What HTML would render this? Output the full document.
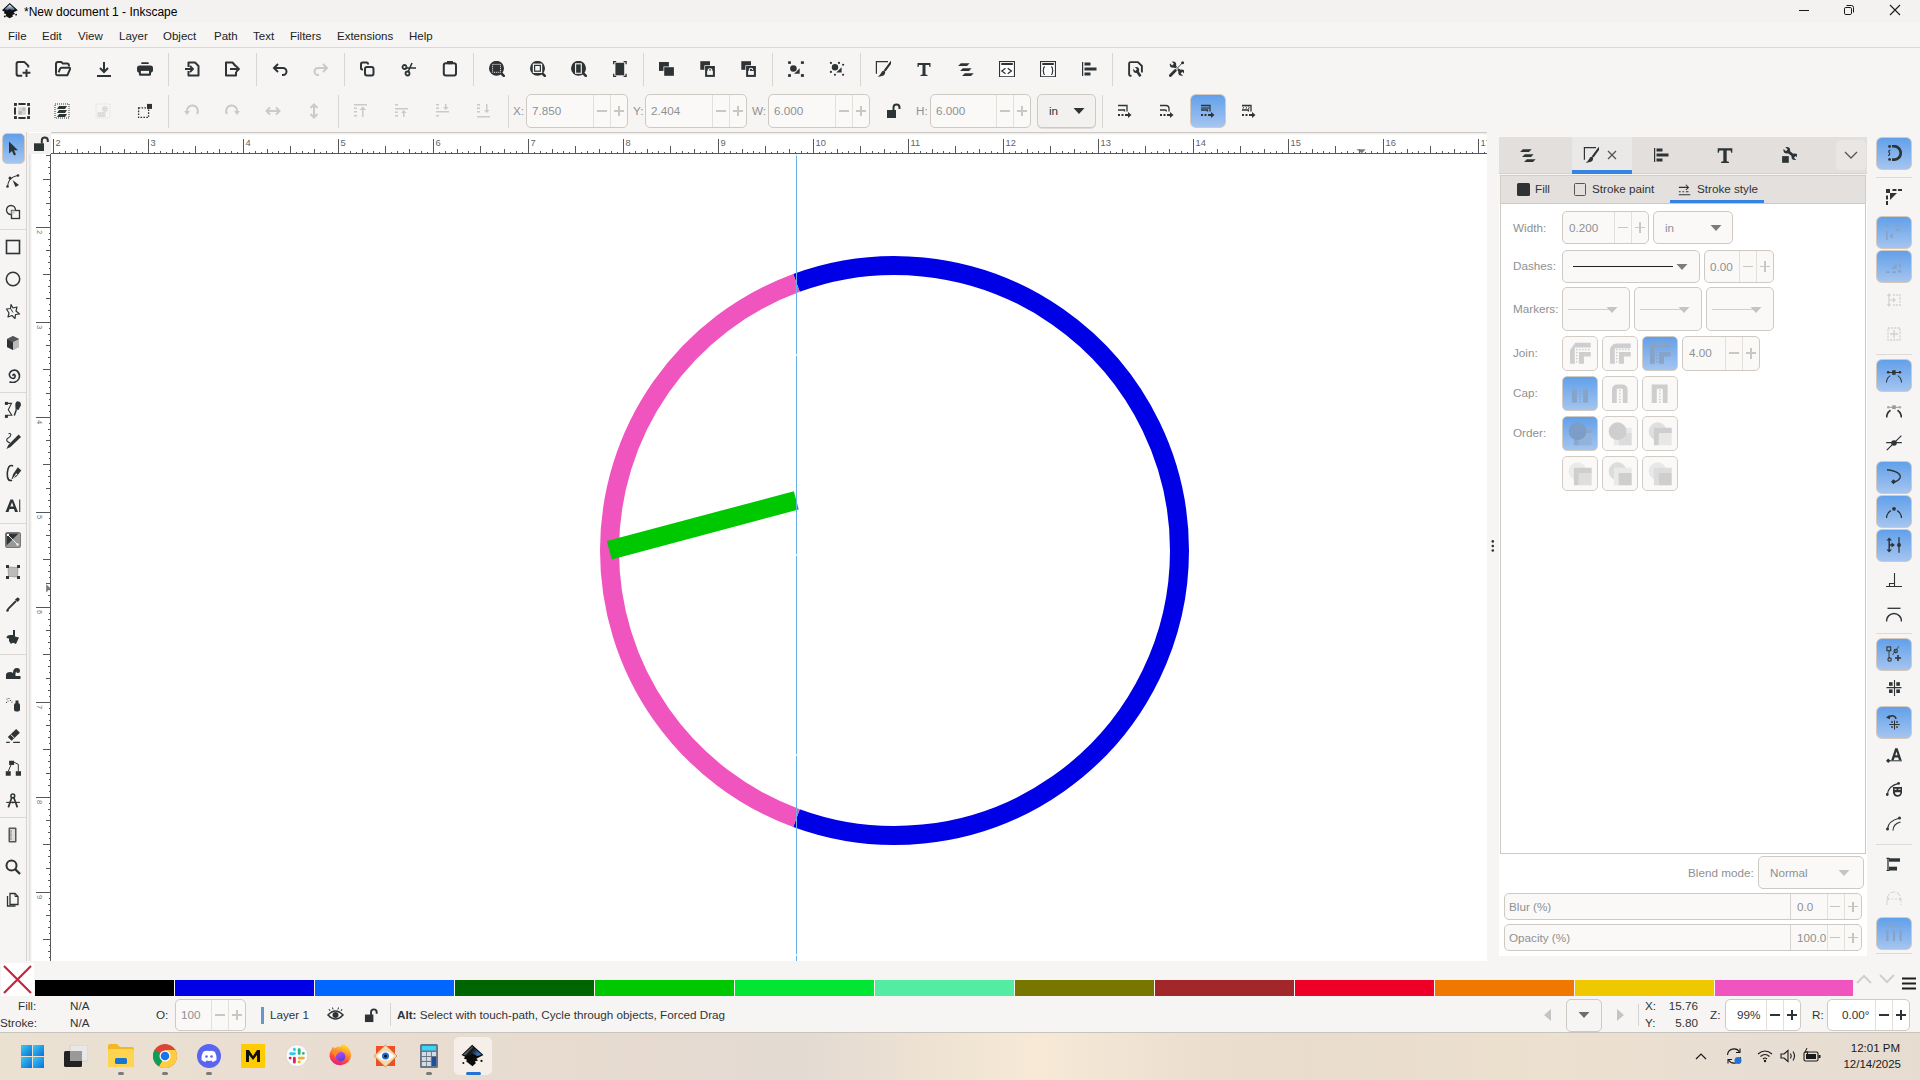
<!DOCTYPE html><html><head><meta charset="utf-8"><style>
html,body{margin:0;padding:0;width:1920px;height:1080px;overflow:hidden;background:#f6f5f4;font-family:"Liberation Sans",sans-serif}
body>div,.ic{position:absolute}
.t{white-space:nowrap;line-height:16px}
</style></head><body>
<div style="left:0px;top:0px;width:1920px;height:23px;background:#f3f2f0"></div>
<svg class="ic" style="left:0px;top:0px;width:20px;height:20px" viewBox="0 0 20 20"><defs><linearGradient id="ttl" x1="0" y1="0" x2="0" y2="1"><stop offset="0" stop-color="#fff"/><stop offset="1" stop-color="#1e4f8a"/></linearGradient></defs><path d="M9.7 3L2 10.3 4.6 11.8 3.8 13.3 6.2 14.2 5.6 15.9 9.7 18.3 13.2 16.3 12.2 14.9 15.2 13.9 13.6 12.3 17.8 10.3z" fill="#111"/><path d="M9.7 4.4L4.6 9.3 7.3 10.4 9.7 9 12.1 10.4 15 9.3z" fill="url(#ttl)"/><circle cx="4.8" cy="16.4" r=".9" fill="#111"/><circle cx="16.1" cy="14.7" r=".9" fill="#111"/></svg>
<div class="t" style="left:24px;top:4px;font-size:12px;color:#000">*New document 1 - Inkscape</div>
<div style="left:1799px;top:10px;width:10px;height:1px;background:#1a1a1a"></div>
<svg class="ic" style="left:1843px;top:4px;width:12px;height:12px" viewBox="0 0 12 12"><rect x="1.5" y="3.5" width="7" height="7" rx="1.3" fill="none" stroke="#1a1a1a" stroke-width="1"/><path d="M3.5 1.5h5a2 2 0 0 1 2 2v5" fill="none" stroke="#1a1a1a" stroke-width="1"/></svg>
<svg class="ic" style="left:1889px;top:4px;width:12px;height:12px" viewBox="0 0 12 12"><path d="M1 1l10 10M11 1L1 11" stroke="#1a1a1a" stroke-width="1.1"/></svg>
<div style="left:0px;top:23px;width:1920px;height:110px;background:#f6f5f4"></div>
<div class="t" style="left:8px;top:28px;font-size:11.5px;color:#222">File</div>
<div class="t" style="left:42px;top:28px;font-size:11.5px;color:#222">Edit</div>
<div class="t" style="left:78px;top:28px;font-size:11.5px;color:#222">View</div>
<div class="t" style="left:119px;top:28px;font-size:11.5px;color:#222">Layer</div>
<div class="t" style="left:163px;top:28px;font-size:11.5px;color:#222">Object</div>
<div class="t" style="left:214px;top:28px;font-size:11.5px;color:#222">Path</div>
<div class="t" style="left:253px;top:28px;font-size:11.5px;color:#222">Text</div>
<div class="t" style="left:290px;top:28px;font-size:11.5px;color:#222">Filters</div>
<div class="t" style="left:337px;top:28px;font-size:11.5px;color:#222">Extensions</div>
<div class="t" style="left:409px;top:28px;font-size:11.5px;color:#222">Help</div>
<div style="left:0px;top:47px;width:1920px;height:1px;background:#dcd8d4"></div>
<svg class="ic" style="left:14.5px;top:61px;width:16px;height:16px" viewBox="0 0 16 16" ><path d="M7.2 14.75H3.4A1.8 1.8 0 0 1 1.6 12.95V2.9A1.8 1.8 0 0 1 3.4 1.1H9.5L13.25 4.8V6.6" fill="none" stroke="#2e3436" stroke-width="2" stroke-linejoin="round"/><path d="M11.5 8.3V16M7.6 11.8H15.4" stroke="#2e3436" stroke-width="2"/></svg>
<svg class="ic" style="left:55px;top:61px;width:16px;height:16px" viewBox="0 0 16 16" ><path d="M1 12.8V3A2 2 0 0 1 3 1H6.3L7.9 2.6H12.3A1.6 1.6 0 0 1 13.9 4.2V5.6" fill="none" stroke="#2e3436" stroke-width="2" stroke-linejoin="round"/><path d="M1 12.8A1.5 1.5 0 0 0 2.5 14.3H12.3L15.2 7.8A0.9 0.9 0 0 0 14.4 6.7H6.6A1.6 1.6 0 0 0 5.1 7.7L3.6 11.3" fill="none" stroke="#2e3436" stroke-width="2" stroke-linejoin="round"/></svg>
<svg class="ic" style="left:96.0px;top:61.0px;width:16px;height:16px" viewBox="0 0 16 16" ><path d="M8 1v10M4 7l4 4 4-4" fill="none" stroke="#2e3436" stroke-width="2"/><path d="M1 15h14" stroke="#2e3436" stroke-width="2"/></svg>
<svg class="ic" style="left:137px;top:61px;width:16px;height:16px" viewBox="0 0 16 16" ><rect x="4.25" y="1.3" width="7.5" height="1.7" rx=".6" fill="#2e3436"/><rect x="0" y="4.4" width="16" height="7.3" rx="2.6" fill="#2e3436"/><rect x="1.9" y="8" width="12.1" height="6.8" rx="1.6" fill="#2e3436"/><rect x="3.9" y="9.9" width="8.1" height="2.7" fill="#f6f5f4"/></svg>
<svg class="ic" style="left:184.5px;top:61.0px;width:16px;height:16px" viewBox="0 0 16 16" ><path d="M3.5 10v4.5h10V5l-3.5-3.5H3.5V6" fill="none" stroke="#2e3436" stroke-width="2" stroke-linejoin="round"/><path d="M0 8h7M5 5l3 3-3 3" fill="none" stroke="#2e3436" stroke-width="1.8"/></svg>
<svg class="ic" style="left:224.0px;top:61.0px;width:16px;height:16px" viewBox="0 0 16 16" ><path d="M12 5.5L8.5 1.5H2v13h10V11" fill="none" stroke="#2e3436" stroke-width="2" stroke-linejoin="round"/><path d="M6 8h9M12 5l3 3-3 3" fill="none" stroke="#2e3436" stroke-width="1.8"/></svg>
<svg class="ic" style="left:272.0px;top:61.0px;width:16px;height:16px" viewBox="0 0 16 16" ><path d="M2 7h9a3.5 3.5 0 0 1 0 7h-1" fill="none" stroke="#2e3436" stroke-width="2"/><path d="M6 3L2 7l4 4" fill="none" stroke="#2e3436" stroke-width="2"/></svg>
<svg class="ic" style="left:313.0px;top:61.0px;width:16px;height:16px" viewBox="0 0 16 16" ><path d="M14 7H5a3.5 3.5 0 0 0 0 7h1" fill="none" stroke="#cacac9" stroke-width="2"/><path d="M10 3l4 4-4 4" fill="none" stroke="#cacac9" stroke-width="2"/></svg>
<svg class="ic" style="left:359.0px;top:61.0px;width:16px;height:16px" viewBox="0 0 16 16" ><path d="M9 3.5V3a1.5 1.5 0 0 0-1.5-1.5h-4A1.5 1.5 0 0 0 2 3v4a1.5 1.5 0 0 0 1.5 1.5H4" fill="none" stroke="#2e3436" stroke-width="2"/><rect x="6" y="6" width="8.5" height="8.5" rx="2" fill="none" stroke="#2e3436" stroke-width="2"/></svg>
<svg class="ic" style="left:401.0px;top:61.0px;width:16px;height:16px" viewBox="0 0 16 16" ><circle cx="3.5" cy="6" r="2" fill="none" stroke="#2e3436" stroke-width="1.8"/><circle cx="6.5" cy="12.5" r="2" fill="none" stroke="#2e3436" stroke-width="1.8"/><path d="M5 7h10M7 11l4-9" fill="none" stroke="#2e3436" stroke-width="1.6"/></svg>
<svg class="ic" style="left:442px;top:61px;width:16px;height:16px" viewBox="0 0 16 16" ><rect x="1.8" y="2.2" width="12.2" height="12.4" rx="2" fill="none" stroke="#2e3436" stroke-width="2"/><rect x="4.9" y="-0.2" width="6.1" height="3.4" rx="1" fill="#2e3436"/></svg>
<svg class="ic" style="left:489.0px;top:61.0px;width:16px;height:16px" viewBox="0 0 16 16" ><circle cx="7.5" cy="7.3" r="7.5" fill="#2e3436"/><path d="M11.5 11.5l3.3 3.3" stroke="#2e3436" stroke-width="2.6" stroke-linecap="round"/><rect x="3.6" y="3.4" width="7.9" height="7.9" fill="none" stroke="#f6f5f4" stroke-width="1" stroke-dasharray="1 .95"/></svg>
<svg class="ic" style="left:530.0px;top:61.0px;width:16px;height:16px" viewBox="0 0 16 16" ><circle cx="7.5" cy="7.3" r="7.5" fill="#2e3436"/><path d="M11.5 11.5l3.3 3.3" stroke="#2e3436" stroke-width="2.6" stroke-linecap="round"/><rect x="3.4" y="3.2" width="8.2" height="8.2" fill="none" stroke="#f6f5f4" stroke-width="1.2"/><rect x="5.2" y="5" width="4.6" height="4.6" fill="#f6f5f4"/></svg>
<svg class="ic" style="left:571.0px;top:61.0px;width:16px;height:16px" viewBox="0 0 16 16" ><circle cx="7.5" cy="7.3" r="7.5" fill="#2e3436"/><path d="M11.5 11.5l3.3 3.3" stroke="#2e3436" stroke-width="2.6" stroke-linecap="round"/><rect x="4.6" y="2.8" width="5.7" height="9.5" fill="none" stroke="#f6f5f4" stroke-width="1.1"/></svg>
<svg class="ic" style="left:612.0px;top:61.0px;width:16px;height:16px" viewBox="0 0 16 16" ><rect x="3.4" y="1.8" width="8.8" height="12.5" fill="#2e3436"/><path d="M1.7 3.2V0.7H4.2M11.6 0.7h2.5v2.5M14.1 12.8v2.5h-2.5M4.2 15.3H1.7v-2.5" fill="none" stroke="#2e3436" stroke-width="1.3"/></svg>
<svg class="ic" style="left:658.0px;top:61.0px;width:16px;height:16px" viewBox="0 0 16 16" ><rect x="1" y="1" width="9.9" height="8.9" fill="#2e3436"/><rect x="5.5" y="5.5" width="11" height="10" fill="#f6f5f4"/><rect x="6.2" y="6.2" width="9.7" height="8.6" fill="#2e3436"/></svg>
<svg class="ic" style="left:699.0px;top:61.0px;width:16px;height:16px" viewBox="0 0 16 16" ><rect x="1.3" y="0.2" width="9.7" height="8.6" fill="#2e3436"/><rect x="5.4" y="4.3" width="11" height="12" fill="#f6f5f4"/><rect x="6.1" y="5" width="9.8" height="10.9" fill="#2e3436"/><rect x="8.1" y="9.9" width="5.8" height="4" fill="#f6f5f4"/><path d="M11 7.2a2.3 2.3 0 0 1 2.3 2.7H8.7A2.3 2.3 0 0 1 11 7.2z" fill="#f6f5f4"/><circle cx="11" cy="8.9" r=".8" fill="#2e3436"/></svg>
<svg class="ic" style="left:740.0px;top:61.0px;width:16px;height:16px" viewBox="0 0 16 16" ><rect x="1.3" y="0.2" width="9.7" height="8.6" fill="#2e3436"/><rect x="5.4" y="4.3" width="11" height="12" fill="#f6f5f4"/><rect x="6.1" y="5" width="9.8" height="10.9" fill="#2e3436"/><rect x="8.1" y="9.9" width="5.8" height="4" fill="#f6f5f4"/><path d="M9.3 10V9a1.7 1.7 0 0 1 3.4 0" fill="none" stroke="#f6f5f4" stroke-width="1.1"/></svg>
<svg class="ic" style="left:788.0px;top:61.0px;width:16px;height:16px" viewBox="0 0 16 16" ><g fill="#2e3436"><rect x="0.1" y="0.3" width="2.8" height="2.6"/><rect x="12.9" y="0.3" width="3" height="2.6"/><rect x="0.1" y="13.1" width="2.8" height="2.8"/><rect x="12.9" y="13.1" width="3" height="2.8"/><path d="M11.7 7.2V12.8H6z"/></g><circle cx="5.4" cy="7.5" r="3.9" fill="#f6f5f4"/><circle cx="5.4" cy="7.5" r="3.3" fill="#2e3436"/></svg>
<svg class="ic" style="left:829.0px;top:61.0px;width:16px;height:16px" viewBox="0 0 16 16" ><g fill="#2e3436"><circle cx="1.9" cy="1.9" r="1.1"/><circle cx="10" cy="1.9" r="1.1"/><circle cx="14.1" cy="3.75" r="1.1"/><circle cx="1.9" cy="10.9" r="1.1"/><circle cx="6" cy="13.75" r="1.1"/><circle cx="14.1" cy="13.75" r="1.1"/><path d="M12.6 6.25V11.6H7.25z"/></g><circle cx="6" cy="6.25" r="3.8" fill="#f6f5f4"/><circle cx="6" cy="6.25" r="3.2" fill="#2e3436"/></svg>
<svg class="ic" style="left:875.0px;top:61.0px;width:16px;height:16px" viewBox="0 0 16 16" ><path d="M13 0.6H1.4V12.8" fill="none" stroke="#2e3436" stroke-width="1.2"/><path d="M16.3 0.8L10.2 9.2" stroke="#2e3436" stroke-width="2.2" stroke-linecap="round"/><path d="M9.3 9.6Q11 11.2 9.6 13.6Q7.8 15.7 2.6 15.7Q5.3 14.2 5.9 12.3Q6.8 9.6 9.3 9.6z" fill="#2e3436"/></svg>
<svg class="ic" style="left:916.0px;top:61.0px;width:16px;height:16px" viewBox="0 0 16 16" ><path d="M1.5 2h13v4h-1l-.5-2H9.5v9.5l2 .5v1h-7v-1l2-.5V4H3L2.5 6h-1z" fill="#2e3436"/></svg>
<svg class="ic" style="left:958.0px;top:61.0px;width:16px;height:16px" viewBox="0 0 16 16" ><path d="M2.8 2.2H11.7L9 4.9H0.1zM4.8 7.2H13.7L11 9.9H2.1zM6.8 12.2H15.7L13 14.9H4.1z" fill="#2e3436"/></svg>
<svg class="ic" style="left:999.0px;top:61.0px;width:16px;height:16px" viewBox="0 0 16 16" ><rect x="0.55" y="0.55" width="14.9" height="15.2" fill="#fff" stroke="#2e3436" stroke-width="1.1"/><rect x="2.1" y="2.1" width="11.9" height="1.9" rx=".8" fill="#2e3436"/><path d="M6.5 7.2L2.8 10 6.5 12.7M8.7 7.2L12.4 10 8.7 12.7" fill="none" stroke="#2e3436" stroke-width="1.3"/></svg>
<svg class="ic" style="left:1040.0px;top:61.0px;width:16px;height:16px" viewBox="0 0 16 16" ><rect x="0.55" y="0.55" width="14.9" height="15.2" fill="#fff" stroke="#2e3436" stroke-width="1.1"/><rect x="2.1" y="2.1" width="11.9" height="1.9" rx=".8" fill="#2e3436"/><path d="M5 5.9Q3.6 5.9 3.6 7.1V8.6Q3.6 9.5 2.7 9.7Q3.6 9.9 3.6 10.8V12.3Q3.6 13.5 5 13.5M11 5.9Q12.4 5.9 12.4 7.1V8.6Q12.4 9.5 13.3 9.7Q12.4 9.9 12.4 10.8V12.3Q12.4 13.5 11 13.5" fill="none" stroke="#2e3436" stroke-width="1.15"/></svg>
<svg class="ic" style="left:1081.0px;top:61.0px;width:16px;height:16px" viewBox="0 0 16 16" ><rect x="1" y="1" width="1.2" height="14" fill="#2e3436"/><rect x="3.5" y="1.5" width="6" height="3" fill="#2e3436"/><rect x="3.5" y="6.5" width="12" height="3" fill="#2e3436"/><rect x="3.5" y="11.5" width="6" height="3" fill="#2e3436"/></svg>
<svg class="ic" style="left:1127.0px;top:61.0px;width:16px;height:16px" viewBox="0 0 16 16" ><path d="M4.5 14.7H3.1Q2.1 14.7 2.1 13.2V2.6Q2.1 1.1 3.6 1.1H10.9L14.9 5V11.5" fill="none" stroke="#2e3436" stroke-width="1.9" stroke-linejoin="round"/><mask id="wmC"><rect x="-2" y="-2" width="20" height="20" fill="#fff"/><path d="M9.2 9.1L6.7 6.6" stroke="#000" stroke-width="2.2"/></mask><g mask="url(#wmC)"><circle cx="9.2" cy="9.1" r="3" fill="#2e3436"/></g><path d="M9.5 9.5L13.5 15.3" stroke="#2e3436" stroke-width="2.6"/></svg>
<svg class="ic" style="left:1168.0px;top:61.0px;width:16px;height:16px" viewBox="0 0 16 16" ><mask id="wmB"><rect x="-2" y="-2" width="20" height="20" fill="#fff"/><path d="M5 3.6L1.5 0.1" stroke="#000" stroke-width="2.4"/><path d="M13.5 11.6L17 15.1" stroke="#000" stroke-width="2.4"/></mask><g mask="url(#wmB)" fill="#2e3436"><circle cx="5" cy="3.6" r="3.2"/><circle cx="13.5" cy="11.6" r="3.2"/><path d="M5 3.6L13.5 11.6" stroke="#2e3436" stroke-width="2.6"/></g><path d="M14.9 1.3L8 8.5" stroke="#f6f5f4" stroke-width="2.2"/><path d="M14.9 1.3L8 8.5" stroke="#2e3436" stroke-width="0.9"/><circle cx="14.6" cy="1.8" r="1.5" fill="#2e3436"/><path d="M7.3 9.6L2.4 14.6" stroke="#f6f5f4" stroke-width="4.2" stroke-linecap="round"/><path d="M7.3 9.6L2.4 14.6" stroke="#2e3436" stroke-width="2.8" stroke-linecap="round"/></svg>
<div style="left:168px;top:53px;width:1px;height:33px;background:#d9d5d1"></div>
<div style="left:256px;top:53px;width:1px;height:33px;background:#d9d5d1"></div>
<div style="left:344px;top:53px;width:1px;height:33px;background:#d9d5d1"></div>
<div style="left:473px;top:53px;width:1px;height:33px;background:#d9d5d1"></div>
<div style="left:643px;top:53px;width:1px;height:33px;background:#d9d5d1"></div>
<div style="left:772px;top:53px;width:1px;height:33px;background:#d9d5d1"></div>
<div style="left:860px;top:53px;width:1px;height:33px;background:#d9d5d1"></div>
<div style="left:1112px;top:53px;width:1px;height:33px;background:#d9d5d1"></div>
<svg class="ic" style="left:14.0px;top:103.0px;width:16px;height:16px" viewBox="0 0 16 16" ><g fill="#2e3436"><rect x="0" y="0" width="2.9" height="2.9"/><rect x="13.1" y="0" width="2.9" height="2.9"/><rect x="0" y="13.1" width="2.9" height="2.9"/><rect x="13.1" y="13.1" width="2.9" height="2.9"/><rect x="4.4" y="0" width="7.2" height="2"/><rect x="4.4" y="14" width="7.2" height="2"/><rect x="0" y="4.4" width="2" height="7.2"/><rect x="14" y="4.4" width="2" height="7.2"/></g><rect x="4.3" y="4.3" width="3.6" height="3.6" fill="#d3d3d3"/><rect x="8.1" y="4.3" width="3.6" height="3.6" fill="#bdbdbd"/><rect x="4.3" y="8.1" width="3.6" height="3.6" fill="#b3b3b3"/><rect x="8.1" y="8.1" width="3.6" height="3.6" fill="#d3d3d3"/></svg>
<svg class="ic" style="left:54.0px;top:103.0px;width:16px;height:16px" viewBox="0 0 16 16" ><rect x="1" y="1" width="14" height="14" fill="none" stroke="#2e3436" stroke-width="1" stroke-dasharray="1 1"/><path d="M5 3h8l-2 3H3zM5 7h8l-2 3H3zM5 11h8l-2 3H3z" fill="#2e3436"/></svg>
<svg class="ic" style="left:95.0px;top:103.0px;width:16px;height:16px" viewBox="0 0 16 16" ><rect x="1" y="1" width="14" height="14" fill="none" stroke="#ddd" stroke-width="1" stroke-dasharray="1 1"/><circle cx="10" cy="6" r="3" fill="#ddd"/><rect x="2.5" y="9" width="8" height="5" fill="#ddd"/></svg>
<svg class="ic" style="left:137.0px;top:103.0px;width:16px;height:16px" viewBox="0 0 16 16" ><rect x="1.6" y="4.8" width="10" height="9.6" fill="none" stroke="#2e3436" stroke-width="1.3" stroke-dasharray="1.6 1.3"/><rect x="10" y="0.9" width="5" height="5" fill="#2e3436"/></svg>
<svg class="ic" style="left:184.0px;top:103.0px;width:16px;height:16px" viewBox="0 0 16 16" ><path d="M3 9a5.5 5.5 0 1 1 10 2" fill="none" stroke="#cacac9" stroke-width="2"/><path d="M0 8h6l-3 4z" fill="#cacac9"/></svg>
<svg class="ic" style="left:224.0px;top:103.0px;width:16px;height:16px" viewBox="0 0 16 16" ><path d="M13 9a5.5 5.5 0 1 0-10 2" fill="none" stroke="#cacac9" stroke-width="2"/><path d="M10 8h6l-3 4z" fill="#cacac9"/></svg>
<svg class="ic" style="left:265.0px;top:103.0px;width:16px;height:16px" viewBox="0 0 16 16" ><path d="M2 8h12M5 4.5L1.5 8 5 11.5M11 4.5L14.5 8 11 11.5" fill="none" stroke="#cacac9" stroke-width="2"/></svg>
<svg class="ic" style="left:306.0px;top:103.0px;width:16px;height:16px" viewBox="0 0 16 16" ><path d="M8 2v12M4.5 5L8 1.5 11.5 5M4.5 11L8 14.5 11.5 11" fill="none" stroke="#cacac9" stroke-width="2"/></svg>
<svg class="ic" style="left:353.0px;top:103.0px;width:16px;height:16px" viewBox="0 0 16 16" ><g fill="#cacac9"><rect x="1" y="1" width="13" height="1.5"/><rect x="1" y="4.5" width="3" height="1.5"/><rect x="1" y="8" width="3" height="1.5"/><rect x="1" y="12" width="3" height="1.5"/><rect x="9" y="6" width="1.5" height="8"/><path d="M6.5 7l3.25-3.5L13 7z"/></g></svg>
<svg class="ic" style="left:394.0px;top:103.0px;width:16px;height:16px" viewBox="0 0 16 16" ><g fill="#cacac9"><rect x="1" y="1" width="3" height="1.5"/><rect x="1" y="5" width="13" height="1.5"/><rect x="1" y="8.5" width="3" height="1.5"/><rect x="1" y="12" width="3" height="1.5"/><rect x="9" y="9" width="1.5" height="5"/><path d="M7 10l2.75-3L12.5 10z"/></g></svg>
<svg class="ic" style="left:435.0px;top:103.0px;width:16px;height:16px" viewBox="0 0 16 16" ><g fill="#cacac9"><rect x="1" y="1" width="3" height="1.5"/><rect x="1" y="4.5" width="3" height="1.5"/><rect x="1" y="8" width="13" height="1.5"/><rect x="1" y="12" width="3" height="1.5"/><rect x="10" y="1" width="1.5" height="4"/><path d="M8 4l2.75 3L13.5 4z"/></g></svg>
<svg class="ic" style="left:476.0px;top:103.0px;width:16px;height:16px" viewBox="0 0 16 16" ><g fill="#cacac9"><rect x="1" y="1" width="3" height="1.5"/><rect x="1" y="4.5" width="3" height="1.5"/><rect x="1" y="8" width="3" height="1.5"/><rect x="1" y="13" width="13" height="1.5"/><rect x="10" y="1" width="1.5" height="7"/><path d="M8 7l2.75 3L13.5 7z"/></g></svg>
<div style="left:168px;top:95px;width:1px;height:33px;background:#d9d5d1"></div>
<div style="left:338px;top:95px;width:1px;height:33px;background:#d9d5d1"></div>
<div style="left:508px;top:95px;width:1px;height:33px;background:#d9d5d1"></div>
<div style="left:1102px;top:95px;width:1px;height:33px;background:#d9d5d1"></div>
<div class="t" style="left:513px;top:103px;font-size:11.7px;color:#8e9192">X:</div>
<div style="left:526px;top:94px;width:102px;height:34px;background:#faf9f8;border:1px solid #cfc9c4;border-radius:5px;box-sizing:border-box"></div>
<div style="left:593px;top:95px;width:1px;height:32px;background:#e3dfdb"></div>
<div style="left:610px;top:95px;width:1px;height:32px;background:#e3dfdb"></div>
<div style="left:596.5px;top:110.2px;width:10.5px;height:1.6px;background:#c9c7c4"></div>
<div style="left:613.5px;top:110.2px;width:10.5px;height:1.6px;background:#c9c7c4"></div>
<div style="left:617.95px;top:105.8px;width:1.6px;height:10.5px;background:#c9c7c4"></div>
<div class="t" style="left:532px;top:103.0px;font-size:11.7px;color:#8e9192">7.850</div>
<div class="t" style="left:633px;top:103px;font-size:11.7px;color:#8e9192">Y:</div>
<div style="left:645px;top:94px;width:102px;height:34px;background:#faf9f8;border:1px solid #cfc9c4;border-radius:5px;box-sizing:border-box"></div>
<div style="left:712px;top:95px;width:1px;height:32px;background:#e3dfdb"></div>
<div style="left:729px;top:95px;width:1px;height:32px;background:#e3dfdb"></div>
<div style="left:715.5px;top:110.2px;width:10.5px;height:1.6px;background:#c9c7c4"></div>
<div style="left:732.5px;top:110.2px;width:10.5px;height:1.6px;background:#c9c7c4"></div>
<div style="left:736.95px;top:105.8px;width:1.6px;height:10.5px;background:#c9c7c4"></div>
<div class="t" style="left:651px;top:103.0px;font-size:11.7px;color:#8e9192">2.404</div>
<div class="t" style="left:752px;top:103px;font-size:11.7px;color:#8e9192">W:</div>
<div style="left:768px;top:94px;width:102px;height:34px;background:#faf9f8;border:1px solid #cfc9c4;border-radius:5px;box-sizing:border-box"></div>
<div style="left:835px;top:95px;width:1px;height:32px;background:#e3dfdb"></div>
<div style="left:852px;top:95px;width:1px;height:32px;background:#e3dfdb"></div>
<div style="left:838.5px;top:110.2px;width:10.5px;height:1.6px;background:#c9c7c4"></div>
<div style="left:855.5px;top:110.2px;width:10.5px;height:1.6px;background:#c9c7c4"></div>
<div style="left:859.95px;top:105.8px;width:1.6px;height:10.5px;background:#c9c7c4"></div>
<div class="t" style="left:774px;top:103.0px;font-size:11.7px;color:#8e9192">6.000</div>
<svg class="ic" style="left:885.5px;top:103.0px;width:16px;height:16px" viewBox="0 0 16 16" ><rect x="1" y="7" width="9" height="8" fill="#2e3436"/><path d="M7.5 7.5V4.5a3 3 0 0 1 6 0V6" fill="none" stroke="#2e3436" stroke-width="2"/></svg>
<div class="t" style="left:916px;top:103px;font-size:11.7px;color:#8e9192">H:</div>
<div style="left:930px;top:94px;width:101px;height:34px;background:#faf9f8;border:1px solid #cfc9c4;border-radius:5px;box-sizing:border-box"></div>
<div style="left:996px;top:95px;width:1px;height:32px;background:#e3dfdb"></div>
<div style="left:1013px;top:95px;width:1px;height:32px;background:#e3dfdb"></div>
<div style="left:999.5px;top:110.2px;width:10.5px;height:1.6px;background:#c9c7c4"></div>
<div style="left:1016.5px;top:110.2px;width:10.5px;height:1.6px;background:#c9c7c4"></div>
<div style="left:1020.95px;top:105.8px;width:1.6px;height:10.5px;background:#c9c7c4"></div>
<div class="t" style="left:936px;top:103.0px;font-size:11.7px;color:#8e9192">6.000</div>
<div style="left:1037px;top:94px;width:59px;height:34px;background:#f3f1ef;border:1px solid #cfc9c4;border-radius:5px;box-sizing:border-box;box-shadow:0 1px 0 #e0dcd8"></div>
<div class="t" style="left:1049px;top:103px;font-size:11.7px;color:#2e3436">in</div>
<svg class="ic" style="left:1073px;top:107px;width:12px;height:8px" viewBox="0 0 12 8"><path d="M0.5 1h11L6 7z" fill="#2e3436"/></svg>
<div style="left:1190px;top:94px;width:36px;height:34px;background:linear-gradient(#62a0ea,#a5c5ef);border:1px solid #d5c8bc;border-radius:6px;box-sizing:border-box"></div>
<svg class="ic" style="left:1117.0px;top:103.0px;width:16px;height:16px" viewBox="0 0 16 16" ><path d="M1 2.5h9v6" fill="none" stroke="#2e3436" stroke-width="1.3"/><path d="M1 7h6.5v1.5" fill="none" stroke="#2e3436" stroke-width="1.3"/><g fill="#2e3436"><rect x="1" y="11" width="2" height="2"/><rect x="4.5" y="11" width="2" height="2"/><rect x="8" y="11" width="4" height="2"/><path d="M11 9l3.5 3-3.5 3z"/></g></svg>
<svg class="ic" style="left:1159.0px;top:103.0px;width:16px;height:16px" viewBox="0 0 16 16" ><path d="M1 2.5h6a3 3 0 0 1 3 3v3" fill="none" stroke="#2e3436" stroke-width="1.3"/><path d="M1 7h5a1.5 1.5 0 0 1 1.5 1.5" fill="none" stroke="#2e3436" stroke-width="1.3"/><g fill="#2e3436"><rect x="1" y="11" width="2" height="2"/><rect x="4.5" y="11" width="2" height="2"/><rect x="8" y="11" width="4" height="2"/><path d="M11 9l3.5 3-3.5 3z"/></g></svg>
<svg class="ic" style="left:1200.0px;top:103.0px;width:16px;height:16px" viewBox="0 0 16 16" ><path d="M1 2.5h9v6" fill="none" stroke="#2e3436" stroke-width="1.3"/><path d="M1 7h6.5v1.5" fill="none" stroke="#2e3436" stroke-width="1.3"/><g fill="#2e3436"><rect x="1" y="11" width="2" height="2"/><rect x="4.5" y="11" width="2" height="2"/><rect x="8" y="11" width="4" height="2"/><path d="M11 9l3.5 3-3.5 3z"/></g><rect x="1" y="4" width="8" height="2" fill="#2e3436" opacity=".6"/></svg>
<svg class="ic" style="left:1241.0px;top:103.0px;width:16px;height:16px" viewBox="0 0 16 16" ><path d="M1 2.5h9v6" fill="none" stroke="#2e3436" stroke-width="1.3"/><path d="M1 7h6.5v1.5" fill="none" stroke="#2e3436" stroke-width="1.3"/><g fill="#2e3436"><rect x="1" y="11" width="2" height="2"/><rect x="4.5" y="11" width="2" height="2"/><rect x="8" y="11" width="4" height="2"/><path d="M11 9l3.5 3-3.5 3z"/></g><path d="M1.5 3.5l1.5 1.2-1.5 1.2M4.5 3.5l1.5 1.2-1.5 1.2M7 3.5l1.5 1.2L7 5.9" fill="none" stroke="#2e3436" stroke-width=".8"/></svg>
<div style="left:0px;top:133px;width:26px;height:828px;background:#f6f5f4"></div>
<div style="left:26px;top:132px;width:1px;height:829px;background:#d8d3ce"></div>
<div style="left:2px;top:133px;width:23px;height:31px;background:linear-gradient(#62a0ea,#a5c5ef);border:1px solid #d5c8bc;border-radius:5px;box-sizing:border-box"></div>
<svg class="ic" style="left:5.0px;top:140.0px;width:16px;height:16px" viewBox="0 0 16 16" ><path d="M4 1.5v12l3-2.5 2 4.5 2-1-2-4.2h4z" fill="#2e3436"/></svg>
<svg class="ic" style="left:5.0px;top:172.0px;width:16px;height:16px" viewBox="0 0 16 16" ><path d="M2.5 14.5C3 9 5 5 12.5 3.5" fill="none" stroke="#2e3436" stroke-width="1.1"/><circle cx="2.5" cy="14.5" r="1.3" fill="#2e3436"/><circle cx="13" cy="3.5" r="1.3" fill="#2e3436"/><circle cx="5" cy="6" r="1.5" fill="#2e3436"/><path d="M7.5 8L14 13l-3.5 2z" fill="#2e3436"/></svg>
<svg class="ic" style="left:5.0px;top:204.0px;width:16px;height:16px" viewBox="0 0 16 16" ><circle cx="6" cy="6" r="4.5" fill="none" stroke="#2e3436" stroke-width="1.3"/><rect x="6.5" y="6.5" width="8" height="8" fill="#f6f5f4" stroke="#2e3436" stroke-width="1.3"/><path d="M6.5 6.5v4a4.5 4.5 0 0 0 4-4z" fill="#ccc"/></svg>
<svg class="ic" style="left:5.0px;top:239.0px;width:16px;height:16px" viewBox="0 0 16 16" ><rect x="1.5" y="1.5" width="13" height="13" fill="none" stroke="#2e3436" stroke-width="1.6"/></svg>
<svg class="ic" style="left:5.0px;top:271.0px;width:16px;height:16px" viewBox="0 0 16 16" ><circle cx="8" cy="8" r="6.7" fill="none" stroke="#2e3436" stroke-width="1.5"/></svg>
<svg class="ic" style="left:5.0px;top:303.0px;width:16px;height:16px" viewBox="0 0 16 16" ><path d="M6 1.5l2 3.5 4-1-1 4 3.5 3-4 .5-.5 4-3-3-4 1.5 1-4L1.5 6l4-.5z" fill="none" stroke="#2e3436" stroke-width="1.2" stroke-linejoin="round"/><path d="M5.5 5.5l2.5 4" stroke="#2e3436" stroke-width="1"/></svg>
<svg class="ic" style="left:5.0px;top:335.0px;width:16px;height:16px" viewBox="0 0 16 16" ><path d="M2 4l6-3 6 3v8l-6 3-6-3z" fill="#888"/><path d="M2 4l6 3v8l-6-3z" fill="#2e3436"/><path d="M8 7l6-3v8l-6 3z" fill="#bbb"/><path d="M2 4l6-3 6 3-6 3z" fill="#555"/></svg>
<svg class="ic" style="left:5.0px;top:367.0px;width:16px;height:16px" viewBox="0 0 16 16" ><path d="M8 8.5a1 1 0 0 1 1.5-1 2.5 2.5 0 0 1-1 4 4 4 0 0 1-4-5 5.5 5.5 0 0 1 7-3 7 7 0 0 1 2.5 8 7 7 0 0 1-9 3.5" fill="none" stroke="#2e3436" stroke-width="1.6" stroke-linecap="round"/></svg>
<svg class="ic" style="left:4px;top:400px;width:18px;height:18px" viewBox="0 0 18 18" ><path d="M2.4 3.4H7.5L4.3 9.8 7.8 15.2H2.4" fill="none" stroke="#2e3436" stroke-width="1.1"/><rect x="0.9" y="1.9" width="3" height="3" fill="#2e3436"/><rect x="0.9" y="14.9" width="3" height="3" fill="#2e3436"/><path d="M13.8 1.2Q17.5 1.5 16.8 5.5L14.5 10 11.5 9.2 11.3 4.5Q11.8 1.2 13.8 1.2z" fill="#2e3436"/><path d="M12.4 9.5L10.3 15.5" stroke="#2e3436" stroke-width="1.5"/></svg>
<svg class="ic" style="left:4px;top:432px;width:18px;height:18px" viewBox="0 0 18 18" ><path d="M4.5 1.8Q7 1 6.8 3T3.5 6.5Q1.8 8 3.5 9.5T6 10.5" fill="none" stroke="#2e3436" stroke-width="1.1"/><path d="M14.6 2.5L17 4.9 6.5 15 2.4 17 4.3 12.9z" fill="#2e3436"/></svg>
<svg class="ic" style="left:4px;top:464px;width:18px;height:18px" viewBox="0 0 18 18" ><path d="M8.5 1.8Q5.5 0.5 4 5Q2.8 9 3.5 13Q4.2 17 7.5 16.5" fill="none" stroke="#2e3436" stroke-width="1.6" stroke-linecap="round"/><path d="M13.8 3.2L17.3 6.5 12.5 12.6 7.5 15.3 9.2 10z" fill="#2e3436"/><path d="M9.3 14L12 10.7" stroke="#f6f5f4" stroke-width=".9"/><circle cx="12.3" cy="10.3" r=".9" fill="#f6f5f4"/></svg>
<svg class="ic" style="left:5.0px;top:498.0px;width:16px;height:16px" viewBox="0 0 16 16" ><path d="M0.5 14L5.5 1.5h2.5l5 12.5h-3l-1-3H4.5l-1 3zM5.3 8.5h3.2L7 4.3z" fill="#2e3436"/><rect x="14" y="1.5" width="1.3" height="12.5" fill="#555"/></svg>
<svg class="ic" style="left:5.0px;top:532.0px;width:16px;height:16px" viewBox="0 0 16 16" ><rect x="0.5" y="0.5" width="15" height="15" rx="1.5" fill="#999" stroke="#777" stroke-width="1"/><path d="M1.5 1.5h12l-12 12z" fill="#2e3436"/><path d="M2.5 2.5l10 10" stroke="#eee" stroke-width="1"/><rect x="2" y="2" width="2" height="2" fill="#fff"/><rect x="11.5" y="11.5" width="2" height="2" fill="#fff"/></svg>
<svg class="ic" style="left:5.0px;top:564.0px;width:16px;height:16px" viewBox="0 0 16 16" ><path d="M3 3l10 0.5L12.5 13 3.5 12.5z" fill="#bbb" stroke="#888" stroke-width=".6"/><g fill="#2e3436"><rect x="1" y="1" width="3" height="3"/><rect x="12" y="1" width="3" height="3"/><rect x="1" y="12" width="3" height="3"/><rect x="12" y="12" width="3" height="3"/></g></svg>
<svg class="ic" style="left:5.0px;top:596.0px;width:16px;height:16px" viewBox="0 0 16 16" ><path d="M12.5 1.5a2 2 0 0 1 2 2.5l-2 2L10 3.5z" fill="#2e3436"/><path d="M11 5L3.5 12.5 2.5 14" fill="none" stroke="#2e3436" stroke-width="1.8"/><circle cx="2.5" cy="14.5" r="1.2" fill="#2e3436"/></svg>
<svg class="ic" style="left:5.0px;top:629.0px;width:16px;height:16px" viewBox="0 0 16 16" ><path d="M1.5 9q0-3 4-3h3v7L6 15l-2-3V9.5" fill="#2e3436"/><path d="M6 6.5l8 2-3 6.5-6-2.5z" fill="#2e3436"/><rect x="8" y="1" width="2" height="8" fill="#2e3436"/><rect x="7.5" y="6" width="3" height="4" fill="#f6f5f4" opacity="0"/></svg>
<svg class="ic" style="left:5.0px;top:664.0px;width:16px;height:16px" viewBox="0 0 16 16" ><path d="M1 15v-5q1-2 4-2 2 0 3 1 0-5 4-5 3 0 3 3 0 2-2 2t-1.5-1.5q-1 0-1 2.5v2q2 0 5 0v3z" fill="#2e3436"/></svg>
<svg class="ic" style="left:5.0px;top:696.0px;width:16px;height:16px" viewBox="0 0 16 16" ><rect x="9" y="7" width="6" height="8.5" rx="2" fill="#2e3436"/><rect x="10.5" y="4.5" width="3" height="2.5" fill="#2e3436"/><g fill="#2e3436"><circle cx="2" cy="3" r=".6"/><circle cx="4" cy="2.5" r=".6"/><circle cx="3" cy="5" r=".6"/><circle cx="5.5" cy="4.5" r=".6"/><circle cx="1.5" cy="6.5" r=".6"/><circle cx="7" cy="6" r=".6"/></g></svg>
<svg class="ic" style="left:5px;top:728px;width:16px;height:16px" viewBox="0 0 16 16" ><path d="M2.8 9L11.2 1.1 14.9 4.8 6.6 12.75z" fill="#2e3436"/><path d="M5.6 6.4L9.3 10" stroke="#f6f5f4" stroke-width="1"/><path d="M1.2 14.4h3.6M8.2 14.4h6.7" stroke="#2e3436" stroke-width="1.1"/></svg>
<svg class="ic" style="left:5px;top:760px;width:16px;height:16px" viewBox="0 0 16 16" ><rect x="4.1" y="0.75" width="5" height="4.2" fill="#2e3436"/><rect x="0.75" y="11.2" width="5" height="4.55" fill="#2e3436"/><rect x="10.75" y="11.2" width="5.25" height="4.55" fill="#2e3436"/><path d="M6 4.9L3.3 11.2M9.1 2.2L13.3 4.4V11.2" fill="none" stroke="#2e3436" stroke-width="1"/></svg>
<svg class="ic" style="left:5px;top:792px;width:16px;height:16px" viewBox="0 0 16 16" ><circle cx="7.8" cy="3.9" r="1.9" fill="none" stroke="#2e3436" stroke-width="1.5"/><path d="M6.8 5.5L3.3 15.4M8.8 5.5L12.4 15.4" stroke="#2e3436" stroke-width="1.7"/><path d="M1.2 10.4h13.7" stroke="#2e3436" stroke-width="1.1"/><circle cx="7.8" cy="10.4" r="1" fill="#2e3436"/></svg>
<svg class="ic" style="left:5.0px;top:827.0px;width:16px;height:16px" viewBox="0 0 16 16" ><rect x="3.5" y="0.5" width="8" height="15" rx="1" fill="#555"/><rect x="5" y="2" width="5" height="12" fill="#ddd"/><path d="M5 4h2M5 6h1.5M5 8h2M5 10h1.5M5 12h2" stroke="#555" stroke-width=".7"/></svg>
<svg class="ic" style="left:5.0px;top:859.0px;width:16px;height:16px" viewBox="0 0 16 16" ><circle cx="6.5" cy="6.5" r="5" fill="none" stroke="#2e3436" stroke-width="2"/><path d="M10 10l5 5" stroke="#2e3436" stroke-width="2.4"/></svg>
<svg class="ic" style="left:5.0px;top:891.0px;width:16px;height:16px" viewBox="0 0 16 16" ><path d="M5 2.5h5l3 3v8H5z" fill="none" stroke="#2e3436" stroke-width="1.3"/><path d="M2.5 5v10h8" fill="none" stroke="#2e3436" stroke-width="1.3"/><path d="M10 2.5v3h3" fill="none" stroke="#2e3436" stroke-width="1"/></svg>
<div style="left:0px;top:229px;width:26px;height:1px;background:#dcd8d4"></div>
<div style="left:0px;top:392px;width:26px;height:1px;background:#dcd8d4"></div>
<div style="left:0px;top:523px;width:26px;height:1px;background:#dcd8d4"></div>
<div style="left:0px;top:654px;width:26px;height:1px;background:#dcd8d4"></div>
<div style="left:0px;top:817px;width:26px;height:1px;background:#dcd8d4"></div>
<svg class="ic" style="left:51px;top:133px;width:1436px;height:21px" viewBox="0 0 1436 21" shape-rendering="crispEdges"><rect x="0" y="0" width="1436" height="21" fill="#fff"/><rect x="0" y="20" width="1436" height="1" fill="#54585a"/><rect x="2" y="6" width="1" height="14" fill="#54585a"/><text x="4.50" y="12.6" font-size="9.3" fill="#5d646c" font-family="Liberation Sans">2</text><rect x="8" y="19" width="1" height="1" fill="#54585a"/><rect x="14" y="18" width="1" height="2" fill="#54585a"/><rect x="20" y="19" width="1" height="1" fill="#54585a"/><rect x="26" y="16" width="1" height="4" fill="#54585a"/><rect x="31" y="19" width="1" height="1" fill="#54585a"/><rect x="37" y="18" width="1" height="2" fill="#54585a"/><rect x="43" y="19" width="1" height="1" fill="#54585a"/><rect x="49" y="13" width="1" height="7" fill="#54585a"/><rect x="55" y="19" width="1" height="1" fill="#54585a"/><rect x="61" y="18" width="1" height="2" fill="#54585a"/><rect x="67" y="19" width="1" height="1" fill="#54585a"/><rect x="73" y="16" width="1" height="4" fill="#54585a"/><rect x="79" y="19" width="1" height="1" fill="#54585a"/><rect x="85" y="18" width="1" height="2" fill="#54585a"/><rect x="91" y="19" width="1" height="1" fill="#54585a"/><rect x="97" y="6" width="1" height="14" fill="#54585a"/><text x="99.50" y="12.6" font-size="9.3" fill="#5d646c" font-family="Liberation Sans">3</text><rect x="103" y="19" width="1" height="1" fill="#54585a"/><rect x="109" y="18" width="1" height="2" fill="#54585a"/><rect x="115" y="19" width="1" height="1" fill="#54585a"/><rect x="121" y="16" width="1" height="4" fill="#54585a"/><rect x="126" y="19" width="1" height="1" fill="#54585a"/><rect x="132" y="18" width="1" height="2" fill="#54585a"/><rect x="138" y="19" width="1" height="1" fill="#54585a"/><rect x="144" y="13" width="1" height="7" fill="#54585a"/><rect x="150" y="19" width="1" height="1" fill="#54585a"/><rect x="156" y="18" width="1" height="2" fill="#54585a"/><rect x="162" y="19" width="1" height="1" fill="#54585a"/><rect x="168" y="16" width="1" height="4" fill="#54585a"/><rect x="174" y="19" width="1" height="1" fill="#54585a"/><rect x="180" y="18" width="1" height="2" fill="#54585a"/><rect x="186" y="19" width="1" height="1" fill="#54585a"/><rect x="192" y="6" width="1" height="14" fill="#54585a"/><text x="194.50" y="12.6" font-size="9.3" fill="#5d646c" font-family="Liberation Sans">4</text><rect x="198" y="19" width="1" height="1" fill="#54585a"/><rect x="204" y="18" width="1" height="2" fill="#54585a"/><rect x="210" y="19" width="1" height="1" fill="#54585a"/><rect x="216" y="16" width="1" height="4" fill="#54585a"/><rect x="221" y="19" width="1" height="1" fill="#54585a"/><rect x="227" y="18" width="1" height="2" fill="#54585a"/><rect x="233" y="19" width="1" height="1" fill="#54585a"/><rect x="239" y="13" width="1" height="7" fill="#54585a"/><rect x="245" y="19" width="1" height="1" fill="#54585a"/><rect x="251" y="18" width="1" height="2" fill="#54585a"/><rect x="257" y="19" width="1" height="1" fill="#54585a"/><rect x="263" y="16" width="1" height="4" fill="#54585a"/><rect x="269" y="19" width="1" height="1" fill="#54585a"/><rect x="275" y="18" width="1" height="2" fill="#54585a"/><rect x="281" y="19" width="1" height="1" fill="#54585a"/><rect x="287" y="6" width="1" height="14" fill="#54585a"/><text x="289.50" y="12.6" font-size="9.3" fill="#5d646c" font-family="Liberation Sans">5</text><rect x="293" y="19" width="1" height="1" fill="#54585a"/><rect x="299" y="18" width="1" height="2" fill="#54585a"/><rect x="305" y="19" width="1" height="1" fill="#54585a"/><rect x="311" y="16" width="1" height="4" fill="#54585a"/><rect x="316" y="19" width="1" height="1" fill="#54585a"/><rect x="322" y="18" width="1" height="2" fill="#54585a"/><rect x="328" y="19" width="1" height="1" fill="#54585a"/><rect x="334" y="13" width="1" height="7" fill="#54585a"/><rect x="340" y="19" width="1" height="1" fill="#54585a"/><rect x="346" y="18" width="1" height="2" fill="#54585a"/><rect x="352" y="19" width="1" height="1" fill="#54585a"/><rect x="358" y="16" width="1" height="4" fill="#54585a"/><rect x="364" y="19" width="1" height="1" fill="#54585a"/><rect x="370" y="18" width="1" height="2" fill="#54585a"/><rect x="376" y="19" width="1" height="1" fill="#54585a"/><rect x="382" y="6" width="1" height="14" fill="#54585a"/><text x="384.50" y="12.6" font-size="9.3" fill="#5d646c" font-family="Liberation Sans">6</text><rect x="388" y="19" width="1" height="1" fill="#54585a"/><rect x="394" y="18" width="1" height="2" fill="#54585a"/><rect x="400" y="19" width="1" height="1" fill="#54585a"/><rect x="406" y="16" width="1" height="4" fill="#54585a"/><rect x="411" y="19" width="1" height="1" fill="#54585a"/><rect x="417" y="18" width="1" height="2" fill="#54585a"/><rect x="423" y="19" width="1" height="1" fill="#54585a"/><rect x="429" y="13" width="1" height="7" fill="#54585a"/><rect x="435" y="19" width="1" height="1" fill="#54585a"/><rect x="441" y="18" width="1" height="2" fill="#54585a"/><rect x="447" y="19" width="1" height="1" fill="#54585a"/><rect x="453" y="16" width="1" height="4" fill="#54585a"/><rect x="459" y="19" width="1" height="1" fill="#54585a"/><rect x="465" y="18" width="1" height="2" fill="#54585a"/><rect x="471" y="19" width="1" height="1" fill="#54585a"/><rect x="477" y="6" width="1" height="14" fill="#54585a"/><text x="479.50" y="12.6" font-size="9.3" fill="#5d646c" font-family="Liberation Sans">7</text><rect x="483" y="19" width="1" height="1" fill="#54585a"/><rect x="489" y="18" width="1" height="2" fill="#54585a"/><rect x="495" y="19" width="1" height="1" fill="#54585a"/><rect x="501" y="16" width="1" height="4" fill="#54585a"/><rect x="506" y="19" width="1" height="1" fill="#54585a"/><rect x="512" y="18" width="1" height="2" fill="#54585a"/><rect x="518" y="19" width="1" height="1" fill="#54585a"/><rect x="524" y="13" width="1" height="7" fill="#54585a"/><rect x="530" y="19" width="1" height="1" fill="#54585a"/><rect x="536" y="18" width="1" height="2" fill="#54585a"/><rect x="542" y="19" width="1" height="1" fill="#54585a"/><rect x="548" y="16" width="1" height="4" fill="#54585a"/><rect x="554" y="19" width="1" height="1" fill="#54585a"/><rect x="560" y="18" width="1" height="2" fill="#54585a"/><rect x="566" y="19" width="1" height="1" fill="#54585a"/><rect x="572" y="6" width="1" height="14" fill="#54585a"/><text x="574.50" y="12.6" font-size="9.3" fill="#5d646c" font-family="Liberation Sans">8</text><rect x="578" y="19" width="1" height="1" fill="#54585a"/><rect x="584" y="18" width="1" height="2" fill="#54585a"/><rect x="590" y="19" width="1" height="1" fill="#54585a"/><rect x="596" y="16" width="1" height="4" fill="#54585a"/><rect x="601" y="19" width="1" height="1" fill="#54585a"/><rect x="607" y="18" width="1" height="2" fill="#54585a"/><rect x="613" y="19" width="1" height="1" fill="#54585a"/><rect x="619" y="13" width="1" height="7" fill="#54585a"/><rect x="625" y="19" width="1" height="1" fill="#54585a"/><rect x="631" y="18" width="1" height="2" fill="#54585a"/><rect x="637" y="19" width="1" height="1" fill="#54585a"/><rect x="643" y="16" width="1" height="4" fill="#54585a"/><rect x="649" y="19" width="1" height="1" fill="#54585a"/><rect x="655" y="18" width="1" height="2" fill="#54585a"/><rect x="661" y="19" width="1" height="1" fill="#54585a"/><rect x="667" y="6" width="1" height="14" fill="#54585a"/><text x="669.50" y="12.6" font-size="9.3" fill="#5d646c" font-family="Liberation Sans">9</text><rect x="673" y="19" width="1" height="1" fill="#54585a"/><rect x="679" y="18" width="1" height="2" fill="#54585a"/><rect x="685" y="19" width="1" height="1" fill="#54585a"/><rect x="691" y="16" width="1" height="4" fill="#54585a"/><rect x="696" y="19" width="1" height="1" fill="#54585a"/><rect x="702" y="18" width="1" height="2" fill="#54585a"/><rect x="708" y="19" width="1" height="1" fill="#54585a"/><rect x="714" y="13" width="1" height="7" fill="#54585a"/><rect x="720" y="19" width="1" height="1" fill="#54585a"/><rect x="726" y="18" width="1" height="2" fill="#54585a"/><rect x="732" y="19" width="1" height="1" fill="#54585a"/><rect x="738" y="16" width="1" height="4" fill="#54585a"/><rect x="744" y="19" width="1" height="1" fill="#54585a"/><rect x="750" y="18" width="1" height="2" fill="#54585a"/><rect x="756" y="19" width="1" height="1" fill="#54585a"/><rect x="762" y="6" width="1" height="14" fill="#54585a"/><text x="764.50" y="12.6" font-size="9.3" fill="#5d646c" font-family="Liberation Sans">10</text><rect x="768" y="19" width="1" height="1" fill="#54585a"/><rect x="774" y="18" width="1" height="2" fill="#54585a"/><rect x="780" y="19" width="1" height="1" fill="#54585a"/><rect x="786" y="16" width="1" height="4" fill="#54585a"/><rect x="791" y="19" width="1" height="1" fill="#54585a"/><rect x="797" y="18" width="1" height="2" fill="#54585a"/><rect x="803" y="19" width="1" height="1" fill="#54585a"/><rect x="809" y="13" width="1" height="7" fill="#54585a"/><rect x="815" y="19" width="1" height="1" fill="#54585a"/><rect x="821" y="18" width="1" height="2" fill="#54585a"/><rect x="827" y="19" width="1" height="1" fill="#54585a"/><rect x="833" y="16" width="1" height="4" fill="#54585a"/><rect x="839" y="19" width="1" height="1" fill="#54585a"/><rect x="845" y="18" width="1" height="2" fill="#54585a"/><rect x="851" y="19" width="1" height="1" fill="#54585a"/><rect x="857" y="6" width="1" height="14" fill="#54585a"/><text x="859.50" y="12.6" font-size="9.3" fill="#5d646c" font-family="Liberation Sans">11</text><rect x="863" y="19" width="1" height="1" fill="#54585a"/><rect x="869" y="18" width="1" height="2" fill="#54585a"/><rect x="875" y="19" width="1" height="1" fill="#54585a"/><rect x="881" y="16" width="1" height="4" fill="#54585a"/><rect x="886" y="19" width="1" height="1" fill="#54585a"/><rect x="892" y="18" width="1" height="2" fill="#54585a"/><rect x="898" y="19" width="1" height="1" fill="#54585a"/><rect x="904" y="13" width="1" height="7" fill="#54585a"/><rect x="910" y="19" width="1" height="1" fill="#54585a"/><rect x="916" y="18" width="1" height="2" fill="#54585a"/><rect x="922" y="19" width="1" height="1" fill="#54585a"/><rect x="928" y="16" width="1" height="4" fill="#54585a"/><rect x="934" y="19" width="1" height="1" fill="#54585a"/><rect x="940" y="18" width="1" height="2" fill="#54585a"/><rect x="946" y="19" width="1" height="1" fill="#54585a"/><rect x="952" y="6" width="1" height="14" fill="#54585a"/><text x="954.50" y="12.6" font-size="9.3" fill="#5d646c" font-family="Liberation Sans">12</text><rect x="958" y="19" width="1" height="1" fill="#54585a"/><rect x="964" y="18" width="1" height="2" fill="#54585a"/><rect x="970" y="19" width="1" height="1" fill="#54585a"/><rect x="976" y="16" width="1" height="4" fill="#54585a"/><rect x="981" y="19" width="1" height="1" fill="#54585a"/><rect x="987" y="18" width="1" height="2" fill="#54585a"/><rect x="993" y="19" width="1" height="1" fill="#54585a"/><rect x="999" y="13" width="1" height="7" fill="#54585a"/><rect x="1005" y="19" width="1" height="1" fill="#54585a"/><rect x="1011" y="18" width="1" height="2" fill="#54585a"/><rect x="1017" y="19" width="1" height="1" fill="#54585a"/><rect x="1023" y="16" width="1" height="4" fill="#54585a"/><rect x="1029" y="19" width="1" height="1" fill="#54585a"/><rect x="1035" y="18" width="1" height="2" fill="#54585a"/><rect x="1041" y="19" width="1" height="1" fill="#54585a"/><rect x="1047" y="6" width="1" height="14" fill="#54585a"/><text x="1049.50" y="12.6" font-size="9.3" fill="#5d646c" font-family="Liberation Sans">13</text><rect x="1053" y="19" width="1" height="1" fill="#54585a"/><rect x="1059" y="18" width="1" height="2" fill="#54585a"/><rect x="1065" y="19" width="1" height="1" fill="#54585a"/><rect x="1071" y="16" width="1" height="4" fill="#54585a"/><rect x="1076" y="19" width="1" height="1" fill="#54585a"/><rect x="1082" y="18" width="1" height="2" fill="#54585a"/><rect x="1088" y="19" width="1" height="1" fill="#54585a"/><rect x="1094" y="13" width="1" height="7" fill="#54585a"/><rect x="1100" y="19" width="1" height="1" fill="#54585a"/><rect x="1106" y="18" width="1" height="2" fill="#54585a"/><rect x="1112" y="19" width="1" height="1" fill="#54585a"/><rect x="1118" y="16" width="1" height="4" fill="#54585a"/><rect x="1124" y="19" width="1" height="1" fill="#54585a"/><rect x="1130" y="18" width="1" height="2" fill="#54585a"/><rect x="1136" y="19" width="1" height="1" fill="#54585a"/><rect x="1142" y="6" width="1" height="14" fill="#54585a"/><text x="1144.50" y="12.6" font-size="9.3" fill="#5d646c" font-family="Liberation Sans">14</text><rect x="1148" y="19" width="1" height="1" fill="#54585a"/><rect x="1154" y="18" width="1" height="2" fill="#54585a"/><rect x="1160" y="19" width="1" height="1" fill="#54585a"/><rect x="1166" y="16" width="1" height="4" fill="#54585a"/><rect x="1171" y="19" width="1" height="1" fill="#54585a"/><rect x="1177" y="18" width="1" height="2" fill="#54585a"/><rect x="1183" y="19" width="1" height="1" fill="#54585a"/><rect x="1189" y="13" width="1" height="7" fill="#54585a"/><rect x="1195" y="19" width="1" height="1" fill="#54585a"/><rect x="1201" y="18" width="1" height="2" fill="#54585a"/><rect x="1207" y="19" width="1" height="1" fill="#54585a"/><rect x="1213" y="16" width="1" height="4" fill="#54585a"/><rect x="1219" y="19" width="1" height="1" fill="#54585a"/><rect x="1225" y="18" width="1" height="2" fill="#54585a"/><rect x="1231" y="19" width="1" height="1" fill="#54585a"/><rect x="1237" y="6" width="1" height="14" fill="#54585a"/><text x="1239.50" y="12.6" font-size="9.3" fill="#5d646c" font-family="Liberation Sans">15</text><rect x="1243" y="19" width="1" height="1" fill="#54585a"/><rect x="1249" y="18" width="1" height="2" fill="#54585a"/><rect x="1255" y="19" width="1" height="1" fill="#54585a"/><rect x="1261" y="16" width="1" height="4" fill="#54585a"/><rect x="1266" y="19" width="1" height="1" fill="#54585a"/><rect x="1272" y="18" width="1" height="2" fill="#54585a"/><rect x="1278" y="19" width="1" height="1" fill="#54585a"/><rect x="1284" y="13" width="1" height="7" fill="#54585a"/><rect x="1290" y="19" width="1" height="1" fill="#54585a"/><rect x="1296" y="18" width="1" height="2" fill="#54585a"/><rect x="1302" y="19" width="1" height="1" fill="#54585a"/><rect x="1308" y="16" width="1" height="4" fill="#54585a"/><rect x="1314" y="19" width="1" height="1" fill="#54585a"/><rect x="1320" y="18" width="1" height="2" fill="#54585a"/><rect x="1326" y="19" width="1" height="1" fill="#54585a"/><rect x="1332" y="6" width="1" height="14" fill="#54585a"/><text x="1334.50" y="12.6" font-size="9.3" fill="#5d646c" font-family="Liberation Sans">16</text><rect x="1338" y="19" width="1" height="1" fill="#54585a"/><rect x="1344" y="18" width="1" height="2" fill="#54585a"/><rect x="1350" y="19" width="1" height="1" fill="#54585a"/><rect x="1356" y="16" width="1" height="4" fill="#54585a"/><rect x="1361" y="19" width="1" height="1" fill="#54585a"/><rect x="1367" y="18" width="1" height="2" fill="#54585a"/><rect x="1373" y="19" width="1" height="1" fill="#54585a"/><rect x="1379" y="13" width="1" height="7" fill="#54585a"/><rect x="1385" y="19" width="1" height="1" fill="#54585a"/><rect x="1391" y="18" width="1" height="2" fill="#54585a"/><rect x="1397" y="19" width="1" height="1" fill="#54585a"/><rect x="1403" y="16" width="1" height="4" fill="#54585a"/><rect x="1409" y="19" width="1" height="1" fill="#54585a"/><rect x="1415" y="18" width="1" height="2" fill="#54585a"/><rect x="1421" y="19" width="1" height="1" fill="#54585a"/><rect x="1427" y="6" width="1" height="14" fill="#54585a"/><text x="1429.50" y="12.6" font-size="9.3" fill="#5d646c" font-family="Liberation Sans">17</text><rect x="1433" y="19" width="1" height="1" fill="#54585a"/></svg>
<svg class="ic" style="left:29px;top:154px;width:22px;height:807px" viewBox="0 0 22 807" shape-rendering="crispEdges"><rect x="0" y="0" width="22" height="807" fill="#fff"/><rect x="21" y="0" width="1" height="807" fill="#54585a"/><rect x="17" y="1" width="4" height="1" fill="#54585a"/><rect x="20" y="7" width="1" height="1" fill="#54585a"/><rect x="19" y="13" width="2" height="1" fill="#54585a"/><rect x="20" y="19" width="1" height="1" fill="#54585a"/><rect x="14" y="25" width="7" height="1" fill="#54585a"/><rect x="20" y="31" width="1" height="1" fill="#54585a"/><rect x="19" y="37" width="2" height="1" fill="#54585a"/><rect x="20" y="43" width="1" height="1" fill="#54585a"/><rect x="17" y="49" width="4" height="1" fill="#54585a"/><rect x="20" y="55" width="1" height="1" fill="#54585a"/><rect x="19" y="61" width="2" height="1" fill="#54585a"/><rect x="20" y="67" width="1" height="1" fill="#54585a"/><rect x="7" y="73" width="14" height="1" fill="#54585a"/><text x="0" y="0" font-size="7.5" fill="#6f757c" font-family="Liberation Sans" transform="translate(8 76.00) rotate(90)">2</text><rect x="20" y="79" width="1" height="1" fill="#54585a"/><rect x="19" y="85" width="2" height="1" fill="#54585a"/><rect x="20" y="91" width="1" height="1" fill="#54585a"/><rect x="17" y="96" width="4" height="1" fill="#54585a"/><rect x="20" y="102" width="1" height="1" fill="#54585a"/><rect x="19" y="108" width="2" height="1" fill="#54585a"/><rect x="20" y="114" width="1" height="1" fill="#54585a"/><rect x="14" y="120" width="7" height="1" fill="#54585a"/><rect x="20" y="126" width="1" height="1" fill="#54585a"/><rect x="19" y="132" width="2" height="1" fill="#54585a"/><rect x="20" y="138" width="1" height="1" fill="#54585a"/><rect x="17" y="144" width="4" height="1" fill="#54585a"/><rect x="20" y="150" width="1" height="1" fill="#54585a"/><rect x="19" y="156" width="2" height="1" fill="#54585a"/><rect x="20" y="162" width="1" height="1" fill="#54585a"/><rect x="7" y="168" width="14" height="1" fill="#54585a"/><text x="0" y="0" font-size="7.5" fill="#6f757c" font-family="Liberation Sans" transform="translate(8 171.00) rotate(90)">3</text><rect x="20" y="174" width="1" height="1" fill="#54585a"/><rect x="19" y="180" width="2" height="1" fill="#54585a"/><rect x="20" y="186" width="1" height="1" fill="#54585a"/><rect x="17" y="191" width="4" height="1" fill="#54585a"/><rect x="20" y="197" width="1" height="1" fill="#54585a"/><rect x="19" y="203" width="2" height="1" fill="#54585a"/><rect x="20" y="209" width="1" height="1" fill="#54585a"/><rect x="14" y="215" width="7" height="1" fill="#54585a"/><rect x="20" y="221" width="1" height="1" fill="#54585a"/><rect x="19" y="227" width="2" height="1" fill="#54585a"/><rect x="20" y="233" width="1" height="1" fill="#54585a"/><rect x="17" y="239" width="4" height="1" fill="#54585a"/><rect x="20" y="245" width="1" height="1" fill="#54585a"/><rect x="19" y="251" width="2" height="1" fill="#54585a"/><rect x="20" y="257" width="1" height="1" fill="#54585a"/><rect x="7" y="263" width="14" height="1" fill="#54585a"/><text x="0" y="0" font-size="7.5" fill="#6f757c" font-family="Liberation Sans" transform="translate(8 266.00) rotate(90)">4</text><rect x="20" y="269" width="1" height="1" fill="#54585a"/><rect x="19" y="275" width="2" height="1" fill="#54585a"/><rect x="20" y="281" width="1" height="1" fill="#54585a"/><rect x="17" y="286" width="4" height="1" fill="#54585a"/><rect x="20" y="292" width="1" height="1" fill="#54585a"/><rect x="19" y="298" width="2" height="1" fill="#54585a"/><rect x="20" y="304" width="1" height="1" fill="#54585a"/><rect x="14" y="310" width="7" height="1" fill="#54585a"/><rect x="20" y="316" width="1" height="1" fill="#54585a"/><rect x="19" y="322" width="2" height="1" fill="#54585a"/><rect x="20" y="328" width="1" height="1" fill="#54585a"/><rect x="17" y="334" width="4" height="1" fill="#54585a"/><rect x="20" y="340" width="1" height="1" fill="#54585a"/><rect x="19" y="346" width="2" height="1" fill="#54585a"/><rect x="20" y="352" width="1" height="1" fill="#54585a"/><rect x="7" y="358" width="14" height="1" fill="#54585a"/><text x="0" y="0" font-size="7.5" fill="#6f757c" font-family="Liberation Sans" transform="translate(8 361.00) rotate(90)">5</text><rect x="20" y="364" width="1" height="1" fill="#54585a"/><rect x="19" y="370" width="2" height="1" fill="#54585a"/><rect x="20" y="376" width="1" height="1" fill="#54585a"/><rect x="17" y="381" width="4" height="1" fill="#54585a"/><rect x="20" y="387" width="1" height="1" fill="#54585a"/><rect x="19" y="393" width="2" height="1" fill="#54585a"/><rect x="20" y="399" width="1" height="1" fill="#54585a"/><rect x="14" y="405" width="7" height="1" fill="#54585a"/><rect x="20" y="411" width="1" height="1" fill="#54585a"/><rect x="19" y="417" width="2" height="1" fill="#54585a"/><rect x="20" y="423" width="1" height="1" fill="#54585a"/><rect x="17" y="429" width="4" height="1" fill="#54585a"/><rect x="20" y="435" width="1" height="1" fill="#54585a"/><rect x="19" y="441" width="2" height="1" fill="#54585a"/><rect x="20" y="447" width="1" height="1" fill="#54585a"/><rect x="7" y="453" width="14" height="1" fill="#54585a"/><text x="0" y="0" font-size="7.5" fill="#6f757c" font-family="Liberation Sans" transform="translate(8 456.00) rotate(90)">6</text><rect x="20" y="459" width="1" height="1" fill="#54585a"/><rect x="19" y="465" width="2" height="1" fill="#54585a"/><rect x="20" y="471" width="1" height="1" fill="#54585a"/><rect x="17" y="476" width="4" height="1" fill="#54585a"/><rect x="20" y="482" width="1" height="1" fill="#54585a"/><rect x="19" y="488" width="2" height="1" fill="#54585a"/><rect x="20" y="494" width="1" height="1" fill="#54585a"/><rect x="14" y="500" width="7" height="1" fill="#54585a"/><rect x="20" y="506" width="1" height="1" fill="#54585a"/><rect x="19" y="512" width="2" height="1" fill="#54585a"/><rect x="20" y="518" width="1" height="1" fill="#54585a"/><rect x="17" y="524" width="4" height="1" fill="#54585a"/><rect x="20" y="530" width="1" height="1" fill="#54585a"/><rect x="19" y="536" width="2" height="1" fill="#54585a"/><rect x="20" y="542" width="1" height="1" fill="#54585a"/><rect x="7" y="548" width="14" height="1" fill="#54585a"/><text x="0" y="0" font-size="7.5" fill="#6f757c" font-family="Liberation Sans" transform="translate(8 551.00) rotate(90)">7</text><rect x="20" y="554" width="1" height="1" fill="#54585a"/><rect x="19" y="560" width="2" height="1" fill="#54585a"/><rect x="20" y="566" width="1" height="1" fill="#54585a"/><rect x="17" y="571" width="4" height="1" fill="#54585a"/><rect x="20" y="577" width="1" height="1" fill="#54585a"/><rect x="19" y="583" width="2" height="1" fill="#54585a"/><rect x="20" y="589" width="1" height="1" fill="#54585a"/><rect x="14" y="595" width="7" height="1" fill="#54585a"/><rect x="20" y="601" width="1" height="1" fill="#54585a"/><rect x="19" y="607" width="2" height="1" fill="#54585a"/><rect x="20" y="613" width="1" height="1" fill="#54585a"/><rect x="17" y="619" width="4" height="1" fill="#54585a"/><rect x="20" y="625" width="1" height="1" fill="#54585a"/><rect x="19" y="631" width="2" height="1" fill="#54585a"/><rect x="20" y="637" width="1" height="1" fill="#54585a"/><rect x="7" y="643" width="14" height="1" fill="#54585a"/><text x="0" y="0" font-size="7.5" fill="#6f757c" font-family="Liberation Sans" transform="translate(8 646.00) rotate(90)">8</text><rect x="20" y="649" width="1" height="1" fill="#54585a"/><rect x="19" y="655" width="2" height="1" fill="#54585a"/><rect x="20" y="661" width="1" height="1" fill="#54585a"/><rect x="17" y="666" width="4" height="1" fill="#54585a"/><rect x="20" y="672" width="1" height="1" fill="#54585a"/><rect x="19" y="678" width="2" height="1" fill="#54585a"/><rect x="20" y="684" width="1" height="1" fill="#54585a"/><rect x="14" y="690" width="7" height="1" fill="#54585a"/><rect x="20" y="696" width="1" height="1" fill="#54585a"/><rect x="19" y="702" width="2" height="1" fill="#54585a"/><rect x="20" y="708" width="1" height="1" fill="#54585a"/><rect x="17" y="714" width="4" height="1" fill="#54585a"/><rect x="20" y="720" width="1" height="1" fill="#54585a"/><rect x="19" y="726" width="2" height="1" fill="#54585a"/><rect x="20" y="732" width="1" height="1" fill="#54585a"/><rect x="7" y="738" width="14" height="1" fill="#54585a"/><text x="0" y="0" font-size="7.5" fill="#6f757c" font-family="Liberation Sans" transform="translate(8 741.00) rotate(90)">9</text><rect x="20" y="744" width="1" height="1" fill="#54585a"/><rect x="19" y="750" width="2" height="1" fill="#54585a"/><rect x="20" y="756" width="1" height="1" fill="#54585a"/><rect x="17" y="761" width="4" height="1" fill="#54585a"/><rect x="20" y="767" width="1" height="1" fill="#54585a"/><rect x="19" y="773" width="2" height="1" fill="#54585a"/><rect x="20" y="779" width="1" height="1" fill="#54585a"/><rect x="14" y="785" width="7" height="1" fill="#54585a"/><rect x="20" y="791" width="1" height="1" fill="#54585a"/><rect x="19" y="797" width="2" height="1" fill="#54585a"/><rect x="20" y="803" width="1" height="1" fill="#54585a"/></svg>
<div style="left:29px;top:133px;width:22px;height:21px;background:#f3f1ef"></div>
<svg class="ic" style="left:29px;top:133px;width:22px;height:21px" viewBox="0 0 22 21"><rect x="5" y="10.3" width="10" height="7.7" fill="#2e3436"/><path d="M12.8 10.5V7.5a3 3 0 0 1 6 0V9" fill="none" stroke="#2e3436" stroke-width="2"/></svg>
<div style="left:51px;top:132px;width:1436px;height:1px;background:#cdc9c6"></div>
<div style="left:29px;top:132px;width:22px;height:1px;background:#fff"></div>
<div style="left:51px;top:133px;width:1436px;height:2px;background:linear-gradient(#e9e7e5,#fff)"></div>
<div style="left:28px;top:133px;width:1px;height:828px;background:#f1efed"></div>
<div style="left:29px;top:154px;width:3px;height:807px;background:linear-gradient(90deg,#dcdcdc,#fdfdfd)"></div>
<svg class="ic" style="left:1355px;top:148px;width:12px;height:7px" viewBox="0 0 12 7"><path d="M1.3 1.2H10.6L7 5.3z" fill="#777b7d"/></svg>
<svg class="ic" style="left:45px;top:583px;width:7px;height:11px" viewBox="0 0 7 11"><path d="M1.2 1.2V9.5L5.5 5.3z" fill="#777b7d"/></svg>
<div style="left:51px;top:154px;width:1436px;height:807px;background:#fff"></div>
<svg class="ic" style="left:0;top:0;width:1920px;height:1080px" viewBox="0 0 1920 1080"><defs><clipPath id="cv"><rect x="51" y="154" width="1436" height="807"/></clipPath></defs><g clip-path="url(#cv)"><path d="M796.5 282.88 A285 285 0 1 1 796.5 818.12" fill="none" stroke="#0000e6" stroke-width="19"/><path d="M796.5 818.12 A285 285 0 0 1 796.5 282.88" fill="none" stroke="#f054bf" stroke-width="19"/><path d="M609.3 550.2 L796.3 500.4" fill="none" stroke="#00c800" stroke-width="19"/><rect x="796" y="154" width="1" height="807" fill="#66b0ea"/><rect x="796" y="154" width="1" height="2" fill="#d9ecfa"/><rect x="796" y="354" width="1" height="2" fill="#d9ecfa"/><rect x="796" y="554" width="1" height="2" fill="#d9ecfa"/><rect x="796" y="754" width="1" height="2" fill="#d9ecfa"/><rect x="796" y="954" width="1" height="2" fill="#d9ecfa"/></g></svg>
<div style="left:1487px;top:133px;width:12px;height:828px;background:#f6f5f4"></div>
<svg class="ic" style="left:1490px;top:539px;width:6px;height:14px" viewBox="0 0 6 14"><circle cx="2.8" cy="2.4" r="1.3" fill="#2e3436"/><circle cx="2.8" cy="7" r="1.3" fill="#2e3436"/><circle cx="2.8" cy="11.5" r="1.3" fill="#2e3436"/></svg>
<div style="left:1499px;top:137px;width:368px;height:37px;background:#e2dfdc"></div>
<div style="left:1499px;top:173px;width:368px;height:1px;background:#d6d1cc"></div>
<div style="left:1572px;top:137px;width:60px;height:36px;background:#ebe9e7"></div>
<div style="left:1572px;top:170px;width:60px;height:4px;background:#3584e4"></div>
<svg class="ic" style="left:1520.0px;top:147.0px;width:16px;height:16px" viewBox="0 0 16 16" ><path d="M2.8 2.2H11.7L9 4.9H0.1zM4.8 7.2H13.7L11 9.9H2.1zM6.8 12.2H15.7L13 14.9H4.1z" fill="#2e3436"/></svg>
<svg class="ic" style="left:1583.0px;top:147.0px;width:16px;height:16px" viewBox="0 0 16 16" ><path d="M13 0.6H1.4V12.8" fill="none" stroke="#2e3436" stroke-width="1.2"/><path d="M16.3 0.8L10.2 9.2" stroke="#2e3436" stroke-width="2.2" stroke-linecap="round"/><path d="M9.3 9.6Q11 11.2 9.6 13.6Q7.8 15.7 2.6 15.7Q5.3 14.2 5.9 12.3Q6.8 9.6 9.3 9.6z" fill="#2e3436"/></svg>
<svg class="ic" style="left:1607px;top:150px;width:10px;height:10px" viewBox="0 0 10 10"><path d="M1 1l8 8M9 1L1 9" stroke="#555" stroke-width="1.3"/></svg>
<svg class="ic" style="left:1653.0px;top:147.0px;width:16px;height:16px" viewBox="0 0 16 16" ><rect x="1" y="1" width="1.2" height="14" fill="#2e3436"/><rect x="3.5" y="1.5" width="6" height="3" fill="#2e3436"/><rect x="3.5" y="6.5" width="12" height="3" fill="#2e3436"/><rect x="3.5" y="11.5" width="6" height="3" fill="#2e3436"/></svg>
<svg class="ic" style="left:1716.0px;top:146.0px;width:18px;height:18px" viewBox="0 0 16 16" ><path d="M1.5 2h13v4h-1l-.5-2H9.5v9.5l2 .5v1h-7v-1l2-.5V4H3L2.5 6h-1z" fill="#2e3436"/></svg>
<svg class="ic" style="left:1781.0px;top:147.0px;width:16px;height:16px" viewBox="0 0 16 16" ><mask id="wmA"><rect x="-2" y="-2" width="20" height="20" fill="#fff"/><path d="M5.8 3.3L2.3 -0.2" stroke="#000" stroke-width="2.4"/><path d="M13.8 9.8L17.3 13.3" stroke="#000" stroke-width="2.4"/><rect x="0" y="8" width="9.5" height="9" fill="#000"/></mask><g mask="url(#wmA)" fill="#2e3436"><circle cx="5.8" cy="3.3" r="3.3"/><circle cx="13.8" cy="9.8" r="3.3"/><path d="M5.8 3.3L13.8 9.8" stroke="#2e3436" stroke-width="2.8"/></g><rect x="1.1" y="9.1" width="6.7" height="6.7" fill="#2e3436"/></svg>
<div style="left:1836px;top:140px;width:30px;height:30px;background:#e9e6e3;border-radius:5px"></div>
<svg class="ic" style="left:1843.0px;top:147.0px;width:16px;height:16px" viewBox="0 0 16 16" ><path d="M2 5l6 6 6-6" fill="none" stroke="#555" stroke-width="1.3"/></svg>
<div style="left:1500px;top:175px;width:366px;height:29px;background:#e3e0dd;border:1px solid #d3cdc8;border-bottom:none;box-sizing:border-box"></div>
<div style="left:1517px;top:183px;width:12.5px;height:12.5px;background:#2e3436;border-radius:1.5px"></div>
<div class="t" style="left:1535px;top:181px;font-size:11.7px;color:#2e3436">Fill</div>
<div style="left:1573.5px;top:183px;width:12.5px;height:12.5px;border:1.3px solid #555;box-sizing:border-box;border-radius:1.5px"></div>
<div class="t" style="left:1592px;top:181px;font-size:11.7px;color:#2e3436">Stroke paint</div>
<svg class="ic" style="left:1677.5px;top:182.5px;width:14px;height:14px" viewBox="0 0 16 16" ><path d="M1 5h11M9 2l3 3-3 3" fill="none" stroke="#2e3436" stroke-width="1.2"/><path d="M1 10h2M5 10h2M9 10h3M1 13.5h13" stroke="#2e3436" stroke-width="1.2"/></svg>
<div class="t" style="left:1697px;top:181px;font-size:11.7px;color:#2e3436">Stroke style</div>
<div style="left:1670px;top:200px;width:94px;height:3.5px;background:#3584e4"></div>
<div style="left:1499px;top:203px;width:368px;height:753px;background:#fff"></div>
<div style="left:1500px;top:203px;width:366px;height:651px;border:1px solid #cfc9c4;box-sizing:border-box;background:#fff"></div>
<div class="t" style="left:1513px;top:220px;font-size:11.7px;color:#8e9192">Width:</div>
<div style="left:1562px;top:211px;width:87px;height:33px;background:#faf9f8;border:1px solid #cfc9c4;border-radius:5px;box-sizing:border-box"></div>
<div style="left:1614px;top:212px;width:1px;height:31px;background:#e3dfdb"></div>
<div style="left:1631px;top:212px;width:1px;height:31px;background:#e3dfdb"></div>
<div style="left:1617.5px;top:226.7px;width:10.5px;height:1.6px;background:#c9c7c4"></div>
<div style="left:1634.5px;top:226.7px;width:10.5px;height:1.6px;background:#c9c7c4"></div>
<div style="left:1638.95px;top:222.3px;width:1.6px;height:10.5px;background:#c9c7c4"></div>
<div class="t" style="left:1569px;top:219.5px;font-size:11.7px;color:#8e9192">0.200</div>
<div style="left:1653px;top:211px;width:80px;height:33px;background:#faf9f8;border:1px solid #cfc9c4;border-radius:5px;box-sizing:border-box"></div>
<div class="t" style="left:1665px;top:219.5px;font-size:11.7px;color:#8e9192">in</div>
<svg class="ic" style="left:1710px;top:224.0px;width:12px;height:8px" viewBox="0 0 12 8"><path d="M0.5 1h11L6 7z" fill="#7b7c7c"/></svg>
<div class="t" style="left:1513px;top:258px;font-size:11.7px;color:#8e9192">Dashes:</div>
<div style="left:1562px;top:250px;width:138px;height:33px;background:#faf9f8;border:1px solid #cfc9c4;border-radius:5px;box-sizing:border-box"></div>
<div style="left:1573px;top:265.65px;width:100px;height:1.7px;background:#1e2224"></div>
<svg class="ic" style="left:1676px;top:263.0px;width:12px;height:8px" viewBox="0 0 12 8"><path d="M0.5 1h11L6 7z" fill="#7b7c7c"/></svg>
<div style="left:1704px;top:250px;width:70px;height:33px;background:#faf9f8;border:1px solid #cfc9c4;border-radius:5px;box-sizing:border-box"></div>
<div style="left:1739px;top:251px;width:1px;height:31px;background:#e3dfdb"></div>
<div style="left:1756px;top:251px;width:1px;height:31px;background:#e3dfdb"></div>
<div style="left:1742.5px;top:265.7px;width:10.5px;height:1.6px;background:#c9c7c4"></div>
<div style="left:1759.5px;top:265.7px;width:10.5px;height:1.6px;background:#c9c7c4"></div>
<div style="left:1763.95px;top:261.3px;width:1.6px;height:10.5px;background:#c9c7c4"></div>
<div class="t" style="left:1710px;top:258.5px;font-size:11.7px;color:#8e9192">0.00</div>
<div class="t" style="left:1513px;top:301px;font-size:11.7px;color:#8e9192">Markers:</div>
<div style="left:1562px;top:287px;width:68px;height:44px;background:#faf9f8;border:1px solid #cfc9c4;border-radius:5px;box-sizing:border-box"></div>
<div style="left:1568px;top:308.5px;width:45px;height:1px;background:#d0cfcc"></div>
<svg class="ic" style="left:1606px;top:305.5px;width:12px;height:8px" viewBox="0 0 12 8"><path d="M0.5 1h11L6 7z" fill="#c6c4c1"/></svg>
<div style="left:1634px;top:287px;width:68px;height:44px;background:#faf9f8;border:1px solid #cfc9c4;border-radius:5px;box-sizing:border-box"></div>
<div style="left:1640px;top:308.5px;width:45px;height:1px;background:#d0cfcc"></div>
<svg class="ic" style="left:1678px;top:305.5px;width:12px;height:8px" viewBox="0 0 12 8"><path d="M0.5 1h11L6 7z" fill="#c6c4c1"/></svg>
<div style="left:1706px;top:287px;width:68px;height:44px;background:#faf9f8;border:1px solid #cfc9c4;border-radius:5px;box-sizing:border-box"></div>
<div style="left:1712px;top:308.5px;width:45px;height:1px;background:#d0cfcc"></div>
<svg class="ic" style="left:1750px;top:305.5px;width:12px;height:8px" viewBox="0 0 12 8"><path d="M0.5 1h11L6 7z" fill="#c6c4c1"/></svg>
<div class="t" style="left:1513px;top:345px;font-size:11.7px;color:#8e9192">Join:</div>
<div class="t" style="left:1513px;top:385px;font-size:11.7px;color:#8e9192">Cap:</div>
<div class="t" style="left:1513px;top:425px;font-size:11.7px;color:#8e9192">Order:</div>
<div style="left:1562px;top:335.5px;width:36px;height:35px;background:#faf9f8;border:1px solid #d2ccc7;border-radius:5px;box-sizing:border-box"></div>
<div style="left:1602px;top:335.5px;width:36px;height:35px;background:#faf9f8;border:1px solid #d2ccc7;border-radius:5px;box-sizing:border-box"></div>
<div style="left:1642px;top:335.5px;width:36px;height:35px;background:linear-gradient(#62a0ea,#a5c5ef);border:1px solid #d2ccc7;border-radius:5px;box-sizing:border-box"></div>
<div style="left:1562px;top:375.5px;width:36px;height:35px;background:linear-gradient(#62a0ea,#a5c5ef);border:1px solid #d2ccc7;border-radius:5px;box-sizing:border-box"></div>
<div style="left:1602px;top:375.5px;width:36px;height:35px;background:#faf9f8;border:1px solid #d2ccc7;border-radius:5px;box-sizing:border-box"></div>
<div style="left:1642px;top:375.5px;width:36px;height:35px;background:#faf9f8;border:1px solid #d2ccc7;border-radius:5px;box-sizing:border-box"></div>
<div style="left:1562px;top:415.5px;width:36px;height:35px;background:linear-gradient(#62a0ea,#a5c5ef);border:1px solid #d2ccc7;border-radius:5px;box-sizing:border-box"></div>
<div style="left:1602px;top:415.5px;width:36px;height:35px;background:#faf9f8;border:1px solid #d2ccc7;border-radius:5px;box-sizing:border-box"></div>
<div style="left:1642px;top:415.5px;width:36px;height:35px;background:#faf9f8;border:1px solid #d2ccc7;border-radius:5px;box-sizing:border-box"></div>
<div style="left:1562px;top:455.5px;width:36px;height:35px;background:#faf9f8;border:1px solid #d2ccc7;border-radius:5px;box-sizing:border-box"></div>
<div style="left:1602px;top:455.5px;width:36px;height:35px;background:#faf9f8;border:1px solid #d2ccc7;border-radius:5px;box-sizing:border-box"></div>
<div style="left:1642px;top:455.5px;width:36px;height:35px;background:#faf9f8;border:1px solid #d2ccc7;border-radius:5px;box-sizing:border-box"></div>
<div style="left:1682px;top:335.5px;width:78px;height:35.5px;background:#faf9f8;border:1px solid #cfc9c4;border-radius:5px;box-sizing:border-box"></div>
<div style="left:1725px;top:336.5px;width:1px;height:33.5px;background:#e3dfdb"></div>
<div style="left:1742px;top:336.5px;width:1px;height:33.5px;background:#e3dfdb"></div>
<div style="left:1728.5px;top:352.45px;width:10.5px;height:1.6px;background:#c9c7c4"></div>
<div style="left:1745.5px;top:352.45px;width:10.5px;height:1.6px;background:#c9c7c4"></div>
<div style="left:1749.95px;top:348.05px;width:1.6px;height:10.5px;background:#c9c7c4"></div>
<div class="t" style="left:1689px;top:345.25px;font-size:11.7px;color:#8e9192">4.00</div>
<svg class="ic" style="left:1562px;top:335.5px;width:36px;height:35px" viewBox="0 0 36 35"><path d="M8 27.8V14.2L13.2 6.7H28.7V11.5H12.8V27.8z" fill="#cdcecd"/><path d="M16.9 27.8V16.1H28.7V20.6H21.9V27.8z" fill="#cdcecd"/><rect x="13.95" y="15.85" width="1.5" height="1.5" fill="#cdcecd"/><rect x="13.95" y="18.85" width="1.5" height="1.5" fill="#cdcecd"/><rect x="13.95" y="21.85" width="1.5" height="1.5" fill="#cdcecd"/><rect x="13.95" y="24.85" width="1.5" height="1.5" fill="#cdcecd"/><rect x="13.95" y="12.85" width="1.5" height="1.5" fill="#cdcecd"/><rect x="16.95" y="12.85" width="1.5" height="1.5" fill="#cdcecd"/><rect x="19.95" y="12.85" width="1.5" height="1.5" fill="#cdcecd"/><rect x="22.95" y="12.85" width="1.5" height="1.5" fill="#cdcecd"/><rect x="25.95" y="12.85" width="1.5" height="1.5" fill="#cdcecd"/></svg>
<svg class="ic" style="left:1602px;top:335.5px;width:36px;height:35px" viewBox="0 0 36 35"><path d="M8 27.8V14A6.5 6.5 0 0 1 14.5 7.5H28.7V12.3H12.8V27.8z" fill="#cdcecd"/><path d="M16.9 27.8V16.1H28.7V20.6H21.9V27.8z" fill="#cdcecd"/><rect x="13.95" y="15.85" width="1.5" height="1.5" fill="#cdcecd"/><rect x="13.95" y="18.85" width="1.5" height="1.5" fill="#cdcecd"/><rect x="13.95" y="21.85" width="1.5" height="1.5" fill="#cdcecd"/><rect x="13.95" y="24.85" width="1.5" height="1.5" fill="#cdcecd"/><rect x="13.95" y="12.85" width="1.5" height="1.5" fill="#cdcecd"/><rect x="16.95" y="12.85" width="1.5" height="1.5" fill="#cdcecd"/><rect x="19.95" y="12.85" width="1.5" height="1.5" fill="#cdcecd"/><rect x="22.95" y="12.85" width="1.5" height="1.5" fill="#cdcecd"/><rect x="25.95" y="12.85" width="1.5" height="1.5" fill="#cdcecd"/></svg>
<svg class="ic" style="left:1642px;top:335.5px;width:36px;height:35px" viewBox="0 0 36 35"><path d="M8 27.8V6.7H28.7V11.5H12.8V27.8z" fill="#87a3c8"/><path d="M16.9 27.8V16.1H28.7V20.6H21.9V27.8z" fill="#87a3c8"/><rect x="13.95" y="15.85" width="1.5" height="1.5" fill="#87a3c8"/><rect x="13.95" y="18.85" width="1.5" height="1.5" fill="#87a3c8"/><rect x="13.95" y="21.85" width="1.5" height="1.5" fill="#87a3c8"/><rect x="13.95" y="24.85" width="1.5" height="1.5" fill="#87a3c8"/><rect x="13.95" y="12.85" width="1.5" height="1.5" fill="#87a3c8"/><rect x="16.95" y="12.85" width="1.5" height="1.5" fill="#87a3c8"/><rect x="19.95" y="12.85" width="1.5" height="1.5" fill="#87a3c8"/><rect x="22.95" y="12.85" width="1.5" height="1.5" fill="#87a3c8"/><rect x="25.95" y="12.85" width="1.5" height="1.5" fill="#87a3c8"/></svg>
<svg class="ic" style="left:1562px;top:375.5px;width:36px;height:35px" viewBox="0 0 36 35"><rect x="9.9" y="13.3" width="5" height="13.3" fill="#87a3c8"/><rect x="21" y="13.3" width="5" height="13.3" fill="#87a3c8"/><rect x="17.25" y="13.75" width="1.5" height="1.5" fill="#87a3c8"/><rect x="17.25" y="16.75" width="1.5" height="1.5" fill="#87a3c8"/><rect x="17.25" y="19.75" width="1.5" height="1.5" fill="#87a3c8"/><rect x="17.25" y="22.75" width="1.5" height="1.5" fill="#87a3c8"/><rect x="17.25" y="25.25" width="1.5" height="1.5" fill="#87a3c8"/></svg>
<svg class="ic" style="left:1602px;top:375.5px;width:36px;height:35px" viewBox="0 0 36 35"><path d="M10 27.1V13.5A5 5 0 0 1 15 8.5H20.6A5 5 0 0 1 25.6 13.5V27.1H20.8V12.7H14.8V27.1z" fill="#cdcecd"/><rect x="17.05" y="13.75" width="1.5" height="1.5" fill="#cdcecd"/><rect x="17.05" y="16.75" width="1.5" height="1.5" fill="#cdcecd"/><rect x="17.05" y="19.75" width="1.5" height="1.5" fill="#cdcecd"/><rect x="17.05" y="22.75" width="1.5" height="1.5" fill="#cdcecd"/><rect x="17.05" y="25.45" width="1.5" height="1.5" fill="#cdcecd"/></svg>
<svg class="ic" style="left:1642px;top:375.5px;width:36px;height:35px" viewBox="0 0 36 35"><path d="M9.7 27.1V8.6H25.6V27.1H20.8V12.7H14.8V27.1z" fill="#cdcecd"/><rect x="17.05" y="13.75" width="1.5" height="1.5" fill="#cdcecd"/><rect x="17.05" y="16.75" width="1.5" height="1.5" fill="#cdcecd"/><rect x="17.05" y="19.75" width="1.5" height="1.5" fill="#cdcecd"/><rect x="17.05" y="22.75" width="1.5" height="1.5" fill="#cdcecd"/><rect x="17.05" y="25.45" width="1.5" height="1.5" fill="#cdcecd"/></svg>
<svg class="ic" style="left:1562px;top:415.5px;width:36px;height:35px" viewBox="0 0 36 35"><path d="M11.9 29.3V11.8H29.7V17H16.7V29.3z" fill="#88a8d0"/><rect x="16.7" y="17" width="13" height="12.3" fill="#92b2da"/><circle cx="15.6" cy="15.2" r="8.9" fill="#7b9dc6"/></svg>
<svg class="ic" style="left:1602px;top:415.5px;width:36px;height:35px" viewBox="0 0 36 35"><path d="M11.9 29.3V11.8H29.7V17H16.7V29.3z" fill="#e9e9e8"/><rect x="16.7" y="17" width="13" height="12.3" fill="#dcdcdc"/><circle cx="15.6" cy="15.2" r="8.9" fill="#cdcecd"/></svg>
<svg class="ic" style="left:1642px;top:415.5px;width:36px;height:35px" viewBox="0 0 36 35"><circle cx="15.6" cy="15.2" r="8.9" fill="#dfdfdf"/><rect x="16.7" y="17" width="13" height="12.3" fill="#e7e7e6"/><path d="M11.9 29.3V11.8H29.7V17H16.7V29.3z" fill="#cdcecd"/></svg>
<svg class="ic" style="left:1562px;top:455.5px;width:36px;height:35px" viewBox="0 0 36 35"><circle cx="15.6" cy="15.2" r="8.9" fill="#ebebea"/><rect x="16.7" y="17" width="13" height="12.3" fill="#dedede"/><path d="M11.9 29.3V11.8H29.7V17H16.7V29.3z" fill="#cdcecd"/></svg>
<svg class="ic" style="left:1602px;top:455.5px;width:36px;height:35px" viewBox="0 0 36 35"><circle cx="15.6" cy="15.2" r="8.9" fill="#dcdcdc"/><path d="M11.9 29.3V11.8H29.7V17H16.7V29.3z" fill="#e9e9e8"/><rect x="16.7" y="17" width="13" height="12.3" fill="#cdcecd"/></svg>
<svg class="ic" style="left:1642px;top:455.5px;width:36px;height:35px" viewBox="0 0 36 35"><circle cx="15.6" cy="15.2" r="8.9" fill="#e8e8e8"/><path d="M11.9 29.3V11.8H29.7V17H16.7V29.3z" fill="#dcdcdc"/><rect x="16.7" y="17" width="13" height="12.3" fill="#cdcecd"/></svg>
<div class="t" style="left:1688px;top:865px;font-size:11.7px;color:#8e9192">Blend mode:</div>
<div style="left:1758px;top:856px;width:106px;height:33px;background:#faf9f8;border:1px solid #cfc9c4;border-radius:5px;box-sizing:border-box"></div>
<svg class="ic" style="left:1838px;top:869.0px;width:12px;height:8px" viewBox="0 0 12 8"><path d="M0.5 1h11L6 7z" fill="#c6c4c1"/></svg>
<div class="t" style="left:1770px;top:865px;font-size:11.7px;color:#8e9192">Normal</div>
<div style="left:1504px;top:893px;width:358px;height:27px;background:#faf9f8;border:1px solid #cfc9c4;border-radius:5px;box-sizing:border-box"></div>
<div style="left:1790px;top:894px;width:1px;height:25px;background:#d8d3cf"></div>
<div style="left:1827px;top:894px;width:1px;height:25px;background:#e3dfdb"></div>
<div style="left:1844px;top:894px;width:1px;height:25px;background:#e3dfdb"></div>
<div style="left:1830px;top:906.0px;width:10px;height:1.3px;background:#c6c4c1"></div>
<div style="left:1848px;top:906.0px;width:10px;height:1.3px;background:#c6c4c1"></div>
<div style="left:1852.4px;top:901.5px;width:1.3px;height:10.5px;background:#c6c4c1"></div>
<div class="t" style="left:1509px;top:898.5px;font-size:11.7px;color:#8e9192">Blur (%)</div>
<div class="t" style="left:1797px;top:898.5px;font-size:11.7px;color:#8e9192">0.0</div>
<div style="left:1504px;top:924px;width:358px;height:27px;background:#faf9f8;border:1px solid #cfc9c4;border-radius:5px;box-sizing:border-box"></div>
<div style="left:1790px;top:925px;width:1px;height:25px;background:#d8d3cf"></div>
<div style="left:1827px;top:925px;width:1px;height:25px;background:#e3dfdb"></div>
<div style="left:1844px;top:925px;width:1px;height:25px;background:#e3dfdb"></div>
<div style="left:1830px;top:937.0px;width:10px;height:1.3px;background:#c6c4c1"></div>
<div style="left:1848px;top:937.0px;width:10px;height:1.3px;background:#c6c4c1"></div>
<div style="left:1852.4px;top:932.5px;width:1.3px;height:10.5px;background:#c6c4c1"></div>
<div class="t" style="left:1509px;top:929.5px;font-size:11.7px;color:#8e9192">Opacity (%)</div>
<div class="t" style="left:1797px;top:929.5px;font-size:11.7px;color:#8e9192">100.0</div>
<div style="left:1876px;top:136.5px;width:36px;height:33px;background:linear-gradient(#62a0ea,#a5c5ef);border:1px solid #d5c8bc;border-radius:6px;box-sizing:border-box"></div>
<svg class="ic" style="left:1886.0px;top:145.0px;width:16px;height:16px" viewBox="0 0 16 16" ><path d="M6 1.2H8A6.7 6.7 0 0 1 8 14.7H6" fill="none" stroke="#2e3436" stroke-width="2.7"/><circle cx="3.6" cy="1.5" r="1.4" fill="#2e3436"/><circle cx="3.6" cy="14.4" r="1.4" fill="#2e3436"/><path d="M4.3 5.4C2.6 5.2 2.2 6.8 3.3 7.8S3.6 10.6 2 10.4" fill="none" stroke="#2e3436" stroke-width="1.1"/></svg>
<svg class="ic" style="left:1886.0px;top:189.0px;width:16px;height:16px" viewBox="0 0 16 16" ><g fill="#2e3436"><rect x="0" y="0" width="4" height="4"/><rect x="6.5" y="0" width="4" height="2"/><rect x="12" y="0" width="4" height="2"/><rect x="0" y="6.5" width="2" height="4"/><rect x="0" y="12" width="2" height="4"/><path d="M4 4h7l-7 7z"/></g></svg>
<div style="left:1876px;top:215.5px;width:36px;height:33px;background:linear-gradient(#62a0ea,#a5c5ef);border:1px solid #d5c8bc;border-radius:6px;box-sizing:border-box"></div>
<svg class="ic" style="left:1886.0px;top:224.0px;width:16px;height:16px" viewBox="0 0 16 16" ><g fill="#88a4c6"><rect x="0.2" y="0.5" width="3.6" height="1.3"/><rect x="6.3" y="0.5" width="9.7" height="1.3"/><rect x="0.2" y="0.5" width="1.5" height="3.5"/><rect x="0.2" y="6.5" width="1.5" height="9.5"/><path d="M11.9 3.5L15 7H8.9z"/><path d="M3.3 12L6.8 9.1V15z"/></g></svg>
<div style="left:1876px;top:249.5px;width:36px;height:33px;background:linear-gradient(#62a0ea,#a5c5ef);border:1px solid #d5c8bc;border-radius:6px;box-sizing:border-box"></div>
<svg class="ic" style="left:1886.0px;top:258.0px;width:16px;height:16px" viewBox="0 0 16 16" ><g fill="#88a4c6"><rect x="13" y="0" width="2" height="3.7"/><rect x="13" y="5.7" width="2" height="4.1"/><rect x="0" y="13.3" width="3.8" height="1.7"/><rect x="6.3" y="13.3" width="3.6" height="1.7"/><path d="M13.5 11.3l2 2-2 2-2-2z"/><path d="M10.9 5.2V10.8H4.8z"/></g></svg>
<svg class="ic" style="left:1886.0px;top:292.0px;width:16px;height:16px" viewBox="0 0 16 16" ><path d="M7 3h7v10H7" fill="none" stroke="#d0d0d0" stroke-width="1.3" stroke-dasharray="2 1.2"/><path d="M3 2v12M1.5 4L3 2l1.5 2M1.5 12L3 14l1.5-2M3 8h6M7 6l2 2-2 2" fill="none" stroke="#d0d0d0" stroke-width="1.2"/></svg>
<svg class="ic" style="left:1886.0px;top:326.0px;width:16px;height:16px" viewBox="0 0 16 16" ><rect x="2" y="2" width="12" height="12" fill="none" stroke="#d0d0d0" stroke-width="1.3" stroke-dasharray="2 1.2"/><path d="M8 4v8M4 8h8" stroke="#d0d0d0" stroke-width="1.3"/></svg>
<div style="left:1876px;top:358.5px;width:36px;height:33px;background:linear-gradient(#62a0ea,#a5c5ef);border:1px solid #d5c8bc;border-radius:6px;box-sizing:border-box"></div>
<svg class="ic" style="left:1886.0px;top:367.0px;width:16px;height:16px" viewBox="0 0 16 16" ><path d="M0.4 15.5A7.6 8.6 0 0 1 4.2 8.6M11.8 8.6A7.6 8.6 0 0 1 15.6 15.5" fill="none" stroke="#2e3436" stroke-width="1.1"/><path d="M2 5.5h12" stroke="#2e3436" stroke-width="1"/><rect x="6.2" y="3.2" width="3.4" height="4.6" fill="#2e3436"/><circle cx="2.2" cy="5.3" r="1.3" fill="#2e3436"/><circle cx="13.9" cy="5.3" r="1.3" fill="#2e3436"/></svg>
<svg class="ic" style="left:1886.0px;top:402.0px;width:16px;height:16px" viewBox="0 0 16 16" ><path d="M0.6 15.5A7.5 8.5 0 0 1 4.5 8.3M11.5 8.3A7.5 8.5 0 0 1 15.4 15.5" fill="none" stroke="#2e3436" stroke-width="1.7"/><path d="M2 5.3h12" stroke="#999" stroke-width="1"/><rect x="6.2" y="3.3" width="3.6" height="3.8" fill="#999"/><circle cx="2.3" cy="5.2" r="1.3" fill="#aaa"/><circle cx="13.9" cy="5.2" r="1.3" fill="#aaa"/></svg>
<svg class="ic" style="left:1886.0px;top:435.0px;width:16px;height:16px" viewBox="0 0 16 16" ><path d="M0.2 7.6h15.6M0.8 15.2L15.4 0.6" stroke="#2e3436" stroke-width="1.2"/><circle cx="8" cy="8" r="2.8" fill="#2e3436"/></svg>
<div style="left:1876px;top:460.5px;width:36px;height:33px;background:linear-gradient(#62a0ea,#a5c5ef);border:1px solid #d5c8bc;border-radius:6px;box-sizing:border-box"></div>
<svg class="ic" style="left:1886.0px;top:469.0px;width:16px;height:16px" viewBox="0 0 16 16" ><path d="M1 0.8Q16 3 14 9Q12.5 12 8 13" fill="none" stroke="#2e3436" stroke-width="1.4"/><path d="M7.5 10.3l2.5 2.5-2.5 2.5-2.5-2.5z" fill="#2e3436"/></svg>
<div style="left:1876px;top:494.5px;width:36px;height:33px;background:linear-gradient(#62a0ea,#a5c5ef);border:1px solid #d5c8bc;border-radius:6px;box-sizing:border-box"></div>
<svg class="ic" style="left:1886.0px;top:503.0px;width:16px;height:16px" viewBox="0 0 16 16" ><path d="M0.4 15A7.6 9 0 0 1 4.8 7.6M11.2 7.6A7.6 9 0 0 1 15.6 15" fill="none" stroke="#2e3436" stroke-width="1.4"/><circle cx="8" cy="5.8" r="1.9" fill="#2e3436"/></svg>
<div style="left:1876px;top:528.5px;width:36px;height:33px;background:linear-gradient(#62a0ea,#a5c5ef);border:1px solid #d5c8bc;border-radius:6px;box-sizing:border-box"></div>
<svg class="ic" style="left:1886.0px;top:537.0px;width:16px;height:16px" viewBox="0 0 16 16" ><path d="M3.2 2v12" stroke="#2e3436" stroke-width="1.5"/><path d="M0.4 3.5L3.2 0.4 6 3.5zM0.4 12.5L3.2 15.6 6 12.5zM5.5 5.5L9 8l-3.5 2.5z" fill="#2e3436"/><path d="M3 8h4" stroke="#2e3436" stroke-width="1.5"/><path d="M13 0.3v15.4" stroke="#2e3436" stroke-width="1.3"/><circle cx="13" cy="8" r="2" fill="#2e3436"/></svg>
<svg class="ic" style="left:1886.0px;top:572.0px;width:16px;height:16px" viewBox="0 0 16 16" ><path d="M0 14.5h16M8.5 1v13.5M3.5 14.5v-3h5" fill="none" stroke="#2e3436" stroke-width="1.1"/></svg>
<svg class="ic" style="left:1886.0px;top:606.0px;width:16px;height:16px" viewBox="0 0 16 16" ><path d="M0.5 15.5A7.5 8 0 0 1 15.5 15.5" fill="none" stroke="#2e3436" stroke-width="1.5"/><path d="M1.5 2.3h13" stroke="#2e3436" stroke-width="1.3"/></svg>
<div style="left:1876px;top:637.5px;width:36px;height:33px;background:linear-gradient(#62a0ea,#a5c5ef);border:1px solid #d5c8bc;border-radius:6px;box-sizing:border-box"></div>
<svg class="ic" style="left:1886.0px;top:646.0px;width:16px;height:16px" viewBox="0 0 16 16" ><rect x="0.9" y="0.9" width="3.8" height="3.8" fill="none" stroke="#2e3436" stroke-width="1.1"/><path d="M3 4.7v7.4" stroke="#2e3436" stroke-width=".9"/><circle cx="3.6" cy="13.6" r="1.7" fill="none" stroke="#2e3436" stroke-width="1.1"/><circle cx="9.7" cy="4.9" r="1.7" fill="none" stroke="#2e3436" stroke-width="1.1"/><path d="M12.8 0.2L6.5 9" stroke="#2e3436" stroke-width=".8"/><path d="M12 9v6M9 12h6" stroke="#2e3436" stroke-width="1.6"/></svg>
<svg class="ic" style="left:1886.0px;top:680.0px;width:16px;height:16px" viewBox="0 0 16 16" ><g fill="#2e3436"><rect x="3" y="2.2" width="3.6" height="3.6"/><rect x="10.3" y="2.2" width="3.6" height="3.6"/><rect x="3" y="9.4" width="3.6" height="3.6"/><rect x="10.3" y="9.4" width="3.6" height="3.6"/></g><path d="M8.5 0v16M0.5 7.6h15" stroke="#2e3436" stroke-width="1.1"/></svg>
<div style="left:1876px;top:705.5px;width:36px;height:33px;background:linear-gradient(#62a0ea,#a5c5ef);border:1px solid #d5c8bc;border-radius:6px;box-sizing:border-box"></div>
<svg class="ic" style="left:1886.0px;top:714.0px;width:16px;height:16px" viewBox="0 0 16 16" ><path d="M2.6 4.3A3.8 3.8 0 0 1 10 5" fill="none" stroke="#2e3436" stroke-width="1.5"/><path d="M0 3.5l3.5-2.6 0.5 4.3z" fill="#2e3436"/><path d="M8.5 6.5v9M3.2 10.5h10.6" stroke="#2e3436" stroke-width="1"/><g fill="#2e3436"><rect x="5.2" y="7.2" width="1.6" height="1.6"/><rect x="10.2" y="7.2" width="1.6" height="1.6"/><rect x="5.2" y="12.2" width="1.6" height="1.6"/><rect x="10.2" y="12.2" width="1.6" height="1.6"/></g></svg>
<svg class="ic" style="left:1886.0px;top:748.0px;width:16px;height:16px" viewBox="0 0 16 16" ><path d="M5.2 12.3L9.2 0.3h2.4l4 12h-2.6l-.9-2.8H8.6l-.9 2.8zM9.3 7.3h2.3L10.4 3.5z" fill="#2e3436"/><path d="M2.5 12.8h13.4" stroke="#2e3436" stroke-width="1"/><path d="M2.2 10.6l2.2 2.2-2.2 2.2-2.2-2.2z" fill="#2e3436"/></svg>
<svg class="ic" style="left:1886.0px;top:782.0px;width:16px;height:16px" viewBox="0 0 16 16" ><path d="M1.3 12.5Q2 4 12.5 1.3" fill="none" stroke="#2e3436" stroke-width="1.2"/><circle cx="1.3" cy="12.5" r="1.4" fill="#2e3436"/><circle cx="12.6" cy="1.4" r="1.4" fill="#2e3436"/><path d="M7 5h9v5.2a4.5 4.5 0 0 1-9 0z" fill="#2e3436"/><path d="M8.4 7.2h2.2M12.4 7.2h2.2" stroke="#f6f5f4" stroke-width="1.1"/><path d="M9 10.3h5.4a2.7 2.7 0 0 1-5.4 0z" fill="#f6f5f4"/></svg>
<svg class="ic" style="left:1886.0px;top:816.0px;width:16px;height:16px" viewBox="0 0 16 16" ><path d="M1.5 13Q2 5 13.5 2" fill="none" stroke="#2e3436" stroke-width="1.2"/><path d="M7 14.5Q7 8 14.5 6" fill="none" stroke="#2e3436" stroke-width="1.2"/><circle cx="1.5" cy="13" r="1.5" fill="#2e3436"/><circle cx="13.5" cy="2" r="1.5" fill="#2e3436"/></svg>
<svg class="ic" style="left:1886.0px;top:856.0px;width:16px;height:16px" viewBox="0 0 16 16" ><rect x="3" y="2.3" width="11" height="3.4" fill="#2e3436"/><rect x="3" y="10.7" width="8" height="3.8" fill="#2e3436"/><path d="M2 2.3v12.2" stroke="#2e3436" stroke-width="1.3"/><path d="M0.5 2.3h3M0.5 14.5h3" stroke="#2e3436" stroke-width="1.2"/></svg>
<svg class="ic" style="left:1886.0px;top:890.0px;width:16px;height:16px" viewBox="0 0 16 16" ><path d="M1 15V10A7 8 0 0 1 15 10V15" fill="none" stroke="#d5d5d5" stroke-width="1.1" stroke-dasharray="5 1.5"/><path d="M2 9h12" stroke="#d5d5d5" stroke-width="1" stroke-dasharray="2 1.5"/><circle cx="2" cy="9" r="1.2" fill="#d5d5d5"/><circle cx="14" cy="9" r="1.2" fill="#d5d5d5"/></svg>
<div style="left:1876px;top:916.5px;width:36px;height:33px;background:linear-gradient(#62a0ea,#a5c5ef);border:1px solid #d5c8bc;border-radius:6px;box-sizing:border-box"></div>
<svg class="ic" style="left:1886.0px;top:925.0px;width:16px;height:16px" viewBox="0 0 16 16" ><g fill="#8aa3c4"><rect x="0.3" y="5" width="2.2" height="11"/><rect x="6.9" y="5" width="2.2" height="11"/><rect x="13.5" y="5" width="2.2" height="11"/></g><path d="M2.5 1.3h4.4M9.1 1.3h4.4M2.5 0v2.6M6.9 0v2.6M9.1 0v2.6M13.5 0v2.6" stroke="#8aa3c4" stroke-width=".8"/></svg>
<div style="left:1876px;top:177px;width:36px;height:1px;background:#dedad6"></div>
<div style="left:1876px;top:354px;width:36px;height:1px;background:#dedad6"></div>
<div style="left:1876px;top:633px;width:36px;height:1px;background:#dedad6"></div>
<div style="left:1876px;top:844px;width:36px;height:1px;background:#dedad6"></div>
<div style="left:1876px;top:953px;width:36px;height:1px;background:#dedad6"></div>
<div style="left:0px;top:961px;width:1920px;height:35px;background:#f6f5f4"></div>
<div style="left:1px;top:963px;width:33px;height:33px;background:#fff"></div>
<svg class="ic" style="left:1px;top:963px;width:33px;height:33px" viewBox="0 0 33 33"><path d="M3 3l27 27M30 3L3 30" stroke="#c8243a" stroke-width="2.2"/></svg>
<div style="left:35px;top:980px;width:139px;height:16px;background:#000000"></div>
<div style="left:175px;top:980px;width:139px;height:16px;background:#0000e6"></div>
<div style="left:315px;top:980px;width:139px;height:16px;background:#0066ff"></div>
<div style="left:455px;top:980px;width:139px;height:16px;background:#006400"></div>
<div style="left:595px;top:980px;width:139px;height:16px;background:#00c800"></div>
<div style="left:735px;top:980px;width:139px;height:16px;background:#00e632"></div>
<div style="left:875px;top:980px;width:139px;height:16px;background:#54eca2"></div>
<div style="left:1015px;top:980px;width:139px;height:16px;background:#777700"></div>
<div style="left:1155px;top:980px;width:139px;height:16px;background:#a2272b"></div>
<div style="left:1295px;top:980px;width:139px;height:16px;background:#ee0026"></div>
<div style="left:1435px;top:980px;width:139px;height:16px;background:#f07800"></div>
<div style="left:1575px;top:980px;width:139px;height:16px;background:#f0c800"></div>
<div style="left:1715px;top:980px;width:138px;height:16px;background:#f054bf"></div>
<svg class="ic" style="left:1856px;top:974px;width:16px;height:10px" viewBox="0 0 16 10"><path d="M1 9l7-7 7 7" fill="none" stroke="#cfcfce" stroke-width="2"/></svg>
<svg class="ic" style="left:1879px;top:974px;width:16px;height:10px" viewBox="0 0 16 10"><path d="M1 1l7 7 7-7" fill="none" stroke="#cfcfce" stroke-width="2"/></svg>
<svg class="ic" style="left:1902px;top:977px;width:14px;height:13px" viewBox="0 0 14 13"><path d="M0 1.5h14M0 6.5h14M0 11.5h14" stroke="#1e1e1e" stroke-width="1.8"/></svg>
<div style="left:0px;top:996px;width:1920px;height:37px;background:#f6f5f4"></div>
<div class="t" style="left:18px;top:998px;font-size:11.7px;color:#2e3436">Fill:</div>
<div class="t" style="left:0px;top:1015px;font-size:11.7px;color:#2e3436">Stroke:</div>
<div class="t" style="left:70px;top:998px;font-size:11.7px;color:#2e3436">N/A</div>
<div class="t" style="left:70px;top:1015px;font-size:11.7px;color:#2e3436">N/A</div>
<div class="t" style="left:156px;top:1007px;font-size:11.7px;color:#2e3436">O:</div>
<div style="left:175px;top:999px;width:71px;height:32px;background:#faf9f8;border:1px solid #cfc9c4;border-radius:5px;box-sizing:border-box"></div>
<div style="left:211px;top:1000px;width:1px;height:30px;background:#e3dfdb"></div>
<div style="left:228px;top:1000px;width:1px;height:30px;background:#e3dfdb"></div>
<div style="left:214.5px;top:1014.2px;width:10.5px;height:1.6px;background:#c9c7c4"></div>
<div style="left:231.5px;top:1014.2px;width:10.5px;height:1.6px;background:#c9c7c4"></div>
<div style="left:235.95px;top:1009.8px;width:1.6px;height:10.5px;background:#c9c7c4"></div>
<div class="t" style="left:181px;top:1007.0px;font-size:11.7px;color:#8e9192">100</div>
<div style="left:261px;top:1007px;width:3px;height:17px;background:#6a95c9"></div>
<div class="t" style="left:270px;top:1007px;font-size:11.7px;color:#2e3436">Layer 1</div>
<svg class="ic" style="left:327px;top:1007px;width:17px;height:15px" viewBox="0 0 17 15"><path d="M1 8q7.5-8 15 0-7.5 8-15 0z" fill="none" stroke="#2e3436" stroke-width="1.6"/><circle cx="8.5" cy="8" r="3" fill="#2e3436"/><path d="M3 4l-1-2M6 2.5L5.5 .5M11 2.5l.5-2M14 4l1-2" stroke="#2e3436" stroke-width="1"/></svg>
<svg class="ic" style="left:363.5px;top:1007.5px;width:15px;height:15px" viewBox="0 0 16 16" ><rect x="1" y="7" width="9" height="8" fill="#2e3436"/><path d="M7.5 7.5V4.5a3 3 0 0 1 6 0V6" fill="none" stroke="#2e3436" stroke-width="2"/></svg>
<div style="left:390px;top:1003px;width:1px;height:23px;background:#d8d3cf"></div>
<div class="t" style="left:397px;top:1007px;font-size:11.7px;color:#2e3436"><b>Alt:</b> Select with touch-path, Cycle through objects, Forced Drag</div>
<svg class="ic" style="left:1543px;top:1008px;width:10px;height:14px" viewBox="0 0 10 14"><path d="M8 1v12L1 7z" fill="#c6c4c1"/></svg>
<div style="left:1566px;top:999px;width:36px;height:33px;background:#f6f5f4;border:1px solid #cfc9c4;border-radius:5px;box-sizing:border-box"></div>
<svg class="ic" style="left:1578px;top:1011px;width:12px;height:8px" viewBox="0 0 12 8"><path d="M0.5 1h11L6 7z" fill="#6d6d6d"/></svg>
<svg class="ic" style="left:1615px;top:1008px;width:10px;height:14px" viewBox="0 0 10 14"><path d="M2 1v12L9 7z" fill="#c6c4c1"/></svg>
<div style="left:1638px;top:1004px;width:1px;height:22px;background:#d8d3cf"></div>
<div class="t" style="left:1645px;top:998px;font-size:11.7px;color:#2e3436">X:</div>
<div class="t" style="left:1645px;top:1015px;font-size:11.7px;color:#2e3436">Y:</div>
<div class="t" style="left:1661px;top:998px;font-size:11.7px;color:#2e3436;width:37px;text-align:right">15.76</div>
<div class="t" style="left:1661px;top:1015px;font-size:11.7px;color:#2e3436;width:37px;text-align:right">5.80</div>
<div class="t" style="left:1710px;top:1007px;font-size:11.7px;color:#2e3436">Z:</div>
<div style="left:1725px;top:999px;width:76px;height:32px;background:#fff;border:1px solid #cfc9c4;border-radius:5px;box-sizing:border-box"></div>
<div style="left:1766px;top:1000px;width:1px;height:30px;background:#e3dfdb"></div>
<div style="left:1783px;top:1000px;width:1px;height:30px;background:#e3dfdb"></div>
<div style="left:1769.5px;top:1014.2px;width:10.5px;height:1.6px;background:#2e3436"></div>
<div style="left:1786.5px;top:1014.2px;width:10.5px;height:1.6px;background:#2e3436"></div>
<div style="left:1790.95px;top:1009.8px;width:1.6px;height:10.5px;background:#2e3436"></div>
<div class="t" style="left:1737px;top:1007.0px;font-size:11.7px;color:#2e3436">99%</div>
<div class="t" style="left:1812px;top:1007px;font-size:11.7px;color:#2e3436">R:</div>
<div style="left:1827px;top:999px;width:83px;height:32px;background:#fff;border:1px solid #cfc9c4;border-radius:5px;box-sizing:border-box"></div>
<div style="left:1875px;top:1000px;width:1px;height:30px;background:#e3dfdb"></div>
<div style="left:1892px;top:1000px;width:1px;height:30px;background:#e3dfdb"></div>
<div style="left:1878.5px;top:1014.2px;width:10.5px;height:1.6px;background:#2e3436"></div>
<div style="left:1895.5px;top:1014.2px;width:10.5px;height:1.6px;background:#2e3436"></div>
<div style="left:1899.95px;top:1009.8px;width:1.6px;height:10.5px;background:#2e3436"></div>
<div class="t" style="left:1842px;top:1007.0px;font-size:11.7px;color:#2e3436">0.00°</div>
<div style="left:0px;top:1032px;width:1920px;height:48px;background:linear-gradient(90deg,#ebe1d1 0%,#e9ded1 15%,#e7dbd0 31%,#e3dad2 42%,#f0e4d3 50%,#f7e9d6 54%,#ecdfd0 62%,#e9dccd 68%,#ece0cf 81%,#e9ded3 90%,#e6dcd0 100%)"></div>
<div style="left:0px;top:1032px;width:1920px;height:1px;background:#c9c3bd"></div>
<svg class="ic" style="left:21px;top:1045px;width:23px;height:23px" viewBox="0 0 23 23"><defs><linearGradient id="wg" x1="0" y1="0" x2="1" y2="1"><stop offset="0" stop-color="#3ccaf6"/><stop offset="1" stop-color="#0a6fd8"/></linearGradient></defs><rect x="0" y="0" width="11" height="11" fill="url(#wg)"/><rect x="12" y="0" width="11" height="11" fill="url(#wg)"/><rect x="0" y="12" width="11" height="11" fill="url(#wg)"/><rect x="12" y="12" width="11" height="11" fill="url(#wg)"/></svg>
<svg class="ic" style="left:64px;top:1045px;width:24px;height:22px" viewBox="0 0 24 22"><rect x="6" y="0" width="18" height="16" rx="1.5" fill="#e8e8e8" stroke="#bbb" stroke-width=".5"/><rect x="0" y="6" width="18" height="16" rx="1.5" fill="#222"/><rect x="6" y="6" width="12" height="10" fill="#999"/></svg>
<svg class="ic" style="left:108px;top:1044px;width:26px;height:23px" viewBox="0 0 26 23"><path d="M0 2a2 2 0 0 1 2-2h7l3 3h12a2 2 0 0 1 2 2v16a2 2 0 0 1-2 2H2a2 2 0 0 1-2-2z" fill="#f2b824"/><rect x="0" y="5" width="26" height="18" rx="1.5" fill="#ffd451"/><rect x="7" y="14" width="12" height="6" rx="1.5" fill="#1677d2"/></svg>
<svg class="ic" style="left:153px;top:1044px;width:24px;height:24px" viewBox="0 0 24 24"><circle cx="12" cy="12" r="12" fill="#db4437"/><path d="M12 12L1.6 6A12 12 0 0 0 6 22.4z" fill="#0f9d58"/><path d="M12 12l-6 10.4A12 12 0 0 0 24 12z" fill="#ffcd40"/><path d="M12 6h10.4A12 12 0 0 1 24 12H12z" fill="#ffcd40"/><circle cx="12" cy="12" r="5.5" fill="#fff"/><circle cx="12" cy="12" r="4.3" fill="#1a73e8"/></svg>
<svg class="ic" style="left:197px;top:1044px;width:24px;height:24px" viewBox="0 0 24 24"><circle cx="12" cy="12" r="12" fill="#5865f2"/><path d="M6 8q3-2 6-1 3-1 6 1 2 4 1.5 8-2 1.5-4 2l-1-1.5q-2.5.8-5 0L8.5 18q-2-.5-4-2-.5-4 1.5-8z" fill="#fff"/><circle cx="9.5" cy="12.5" r="1.3" fill="#5865f2"/><circle cx="14.5" cy="12.5" r="1.3" fill="#5865f2"/></svg>
<svg class="ic" style="left:241px;top:1044px;width:24px;height:24px" viewBox="0 0 24 24"><rect width="24" height="24" fill="#ffcc00"/><path d="M5 18V6h3l4 6 4-6h3v12h-3v-7l-4 5-4-5v7z" fill="#111"/></svg>
<svg class="ic" style="left:285px;top:1044px;width:24px;height:24px" viewBox="0 0 24 24"><circle cx="11.9" cy="11.6" r="11" fill="#fafafa" stroke="#d6d0ca" stroke-width=".8"/><g stroke-linecap="round" stroke-width="2.8"><path d="M5.6 9.6h3.9M9.4 5.2v.6" stroke="#36c5f0"/><path d="M14.2 5.6v3.9M18.3 9.3h.1" stroke="#2eb67d"/><path d="M9.4 14.2v4M5.1 14.1h.1" stroke="#e01e5a"/><path d="M14.2 14.1h4.2M14 17.9h.3" stroke="#ecb22e"/></g></svg>
<svg class="ic" style="left:328px;top:1043px;width:25px;height:25px" viewBox="0 0 25 25"><defs><linearGradient id="ffb" x1="0.7" y1="0" x2="0.3" y2="1"><stop offset="0" stop-color="#ffe226"/><stop offset=".35" stop-color="#ff9a2e"/><stop offset=".7" stop-color="#ff4a3a"/><stop offset="1" stop-color="#e31587"/></linearGradient><linearGradient id="ffp" x1="0.2" y1="0" x2="0.6" y2="1"><stop offset="0" stop-color="#b14dff"/><stop offset="1" stop-color="#5a3fd1"/></linearGradient></defs><path d="M3.6 6.5L5 3.5 6.5 5.5 8 4.5Q10 3 12.5 3.8 14 0.5 16.5 1.5 22.5 5 23.2 12.5A11 11 0 0 1 1.5 13.5Q1.5 9 3.6 6.5z" fill="url(#ffb)"/><circle cx="12.6" cy="13.6" r="4.8" fill="url(#ffp)"/><path d="M3.5 9Q7 6.5 10 7.5 12.5 8 14.5 6.5 13 9.5 10.5 9.8Q8 11 7.5 14 6 11 3.5 9z" fill="#ff8a2a"/></svg>
<svg class="ic" style="left:373px;top:1044px;width:25px;height:24px" viewBox="0 0 25 24"><rect x="3" y="2" width="19" height="20" fill="#f04e23"/><path d="M12.5 1l11.5 11-11.5 11L1 12z" fill="#f5d9b0" stroke="#c98b4a" stroke-width=".8"/><path d="M4 12q8.5-9 17 0-8.5 9-17 0z" fill="#fff"/><circle cx="12.5" cy="12" r="3.5" fill="#1e6fd0"/><circle cx="12.5" cy="12" r="1.5" fill="#111"/></svg>
<svg class="ic" style="left:420px;top:1044px;width:18px;height:24px" viewBox="0 0 18 24"><rect width="18" height="24" rx="1.5" fill="#6a7686"/><rect x="1.9" y="2" width="14.2" height="4.5" fill="#3ad4f5"/><g fill="#d5dbe3"><rect x="1.9" y="8" width="4.1" height="4"/><rect x="6.8" y="8" width="4.1" height="4"/><rect x="11.9" y="8" width="4.2" height="4"/><rect x="1.9" y="13" width="4.1" height="3.9"/><rect x="6.8" y="13" width="4.1" height="3.9"/><rect x="1.9" y="18" width="4.1" height="4"/><rect x="6.8" y="18" width="4.1" height="4"/></g><rect x="11.9" y="13" width="4.2" height="9" fill="#1b4f9c"/></svg>
<div style="left:454px;top:1037px;width:38px;height:38px;background:#f5eee9;border-radius:5px"></div>
<svg class="ic" style="left:461px;top:1044px;width:24px;height:24px" viewBox="0 0 24 24"><defs><linearGradient id="tki" x1="0.1" y1="0.2" x2="0.9" y2="0.6"><stop offset="0" stop-color="#fff"/><stop offset=".45" stop-color="#111"/><stop offset="1" stop-color="#3a6db0"/></linearGradient></defs><path d="M11.2 0.7L0.6 11l3.4 1.8-1 2 2.8.6-.5 2.2L11.5 22.3 15 19l-1.4-1.5 3.5-1-1.8-1.8L22.4 11z" fill="#0b0b0b"/><path d="M11.2 2.2L2.4 10.8 6.2 12.1 11.2 9.2 16.5 12.1 20.6 10.8z" fill="url(#tki)"/><circle cx="2.4" cy="19" r="1" fill="#111"/><circle cx="20.5" cy="16.9" r="1.1" fill="#111"/></svg>
<div style="left:466px;top:1072px;width:15px;height:3px;background:#1f74d6;border-radius:2px"></div>
<div style="left:118px;top:1072px;width:6px;height:3px;background:#7a7a7a;border-radius:2px"></div>
<div style="left:162px;top:1072px;width:6px;height:3px;background:#7a7a7a;border-radius:2px"></div>
<div style="left:206px;top:1072px;width:6px;height:3px;background:#7a7a7a;border-radius:2px"></div>
<div style="left:426px;top:1072px;width:6px;height:3px;background:#7a7a7a;border-radius:2px"></div>
<svg class="ic" style="left:1695px;top:1052px;width:12px;height:8px" viewBox="0 0 12 8"><path d="M1 7l5-5 5 5" fill="none" stroke="#1a1a1a" stroke-width="1.2"/></svg>
<svg class="ic" style="left:1725px;top:1047px;width:18px;height:18px" viewBox="0 0 18 18"><path d="M2.5 8a6.5 6.5 0 0 1 12-3M15.5 10a6.5 6.5 0 0 1-12 3" fill="none" stroke="#1a1a1a" stroke-width="1.1"/><path d="M15 1.5v4h-4M3 16.5v-4h4" fill="none" stroke="#1a1a1a" stroke-width="1.1"/><circle cx="13" cy="13.5" r="3.5" fill="#1f74d6"/></svg>
<svg class="ic" style="left:1757px;top:1049px;width:16px;height:14px" viewBox="0 0 16 14"><path d="M1 5q7-6 14 0M3.5 7.5q4.5-4 9 0M6 10q2-2 4 0" fill="none" stroke="#1a1a1a" stroke-width="1.1"/><circle cx="8" cy="12" r="1.2" fill="#1a1a1a"/></svg>
<svg class="ic" style="left:1780px;top:1049px;width:17px;height:14px" viewBox="0 0 17 14"><path d="M1 5h3l4-3.5v11L4 9H1z" fill="none" stroke="#1a1a1a" stroke-width="1.1"/><path d="M10.5 4.5q1.5 2.5 0 5M13 2.5q3 4.5 0 9" fill="none" stroke="#1a1a1a" stroke-width="1.1"/></svg>
<svg class="ic" style="left:1803px;top:1048px;width:18px;height:15px" viewBox="0 0 18 15"><rect x="1" y="4" width="14" height="9" rx="1.5" fill="none" stroke="#1a1a1a" stroke-width="1.1"/><rect x="3" y="6" width="10" height="5" fill="#1a1a1a"/><rect x="15.5" y="7" width="2" height="3" fill="#1a1a1a"/><path d="M4 0l-2 4h3l-1 3" fill="none" stroke="#1a1a1a" stroke-width="1"/></svg>
<div class="t" style="left:1822px;top:1040px;font-size:11.5px;color:#1a1a1a;width:78px;text-align:right">12:01 PM</div>
<div class="t" style="left:1823px;top:1056px;font-size:11.5px;color:#1a1a1a;width:78px;text-align:right">12/14/2025</div>
</body></html>
